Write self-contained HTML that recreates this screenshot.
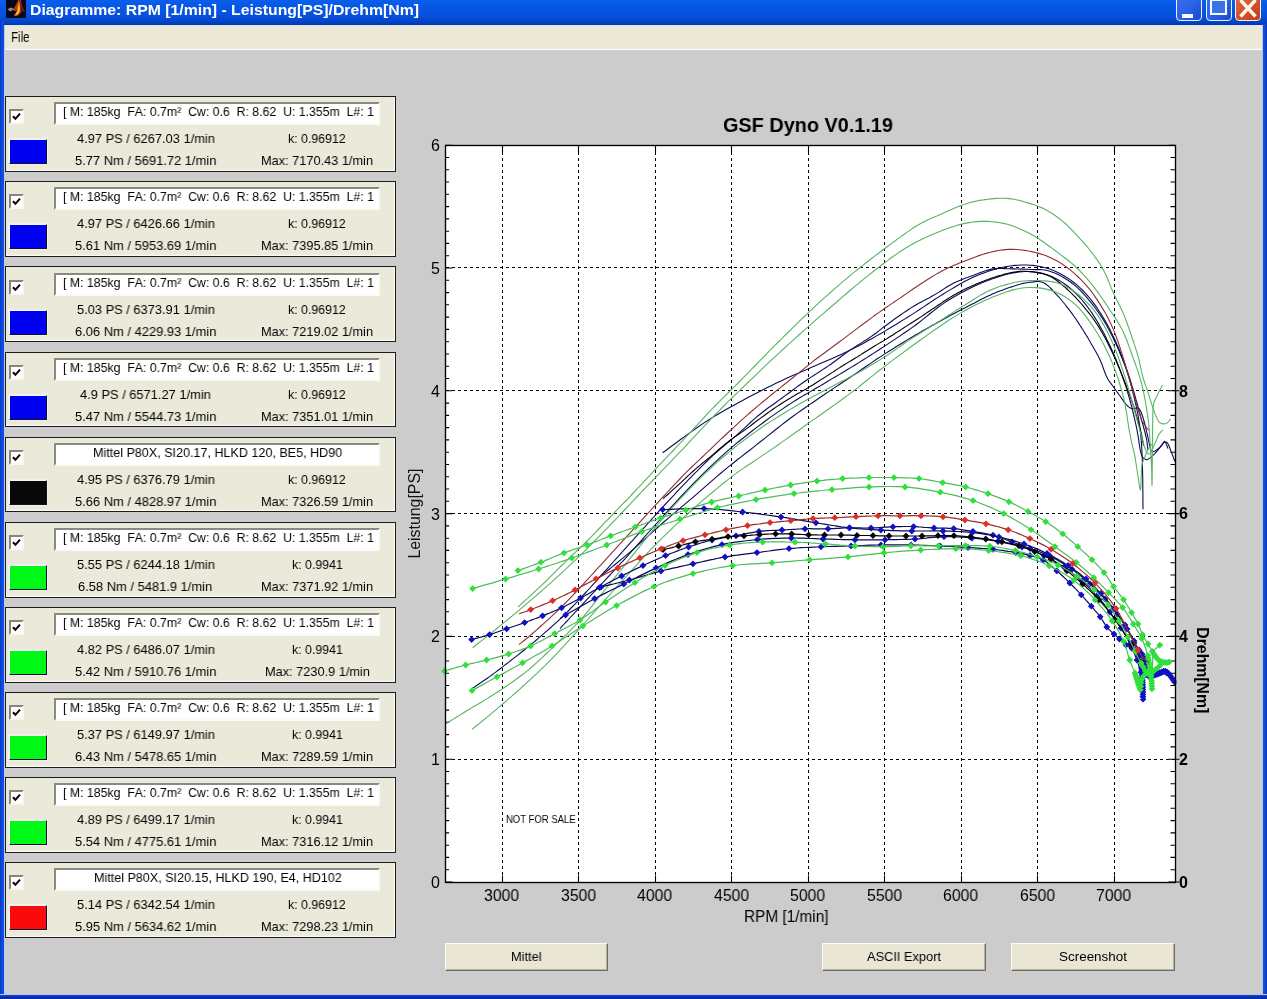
<!DOCTYPE html>
<html><head><meta charset="utf-8"><title>Diagramme</title><style>
html,body{margin:0;padding:0}
body{width:1267px;height:999px;overflow:hidden;background:#cccccc;font-family:"Liberation Sans", sans-serif;position:relative}
.t{position:absolute;white-space:pre;line-height:normal;transform-origin:0 0;font-kerning:none;will-change:transform}
.titlebar{position:absolute;left:0;top:0;width:1267px;height:25px;background:linear-gradient(#0b5fee 0,#0858e6 20%,#0653e0 55%,#0448cf 80%,#0238ac 100%)}
.menubar{position:absolute;left:4px;top:25px;width:1258px;height:24px;background:#ece9d8;border-top:1px solid #d8e4f8;box-sizing:border-box}
.menuline{position:absolute;left:4px;top:49px;width:1258px;height:1px;background:#fdfdfb}
.bl{position:absolute;left:0;top:20px;width:4px;height:979px;background:linear-gradient(90deg,#0a2fc0 0,#0b49dc 35%,#0c4fe0 100%)}
.bl2{position:absolute;left:4px;top:25px;width:1px;height:969px;background:#b9ccf0}
.br{position:absolute;left:1263px;top:24px;width:4px;height:975px;background:linear-gradient(90deg,#1552e0 0,#0c46d6 60%,#0a2fb4 100%)}
.br2{position:absolute;left:1261.5px;top:25px;width:1.5px;height:969px;background:#b6c8ee}
.bb{position:absolute;left:0;top:993.6px;width:1267px;height:5.4px;background:linear-gradient(#b8cdf6 0,#a9c0f2 16%,#1a43c0 30%,#0a2ba6 60%,#0a2fae 100%)}
.wb{position:absolute;top:-5px;height:26px;width:26px;border:1.3px solid #e8f2ff;border-radius:4px;box-sizing:border-box}
.pn{position:absolute;left:5px;width:391px;height:75.7px;box-sizing:border-box;border:1.3px solid #1c1c1c;background:#ebe9d9;box-shadow:inset -1.2px -1.2px 0 #fafaf2}
.cb{position:absolute;left:3.2px;top:12.4px;width:15px;height:15px;box-sizing:border-box;background:#fff;border:2px solid;border-color:#85857c #f8f8f2 #f8f8f2 #85857c}
.cb svg{position:absolute;left:0;top:0}
.ed{position:absolute;left:47.6px;top:4.8px;width:326.5px;height:23px;box-sizing:border-box;background:#fff;border:2px solid;border-color:#8a8a80 #fbfbf6 #fbfbf6 #8a8a80}
.sw{position:absolute;left:2.9px;top:41.8px;width:38.5px;height:25px;box-sizing:border-box;border:1px solid;border-color:#f4f4ff #101030 #101030 #f4f4ff;outline:1px solid #f2f0e6}
.btn{position:absolute;top:943px;height:27.8px;box-sizing:border-box;background:#e9e6d4;border:1.5px solid;border-color:#fbfbf4 #6e6e64 #6e6e64 #fbfbf4;box-shadow:inset -1px -1px 0 #b4b2a2}
.chart{position:absolute;left:0;top:0;will-change:transform}
</style></head><body>
<div class="titlebar"></div>
<svg style="position:absolute;left:6px;top:0" width="20" height="18" viewBox="0 0 20 18"><rect width="20" height="18" fill="#06061c"/><path d="M1.2 9.4 L4.6 7.4 L7.6 8.8 L5 11.6Z" fill="#8e9192"/><path d="M7 9 C9.5 6.5 11 2.5 12.2 0 L14.8 0 C15.4 4.5 16.8 8 18.8 11.5 C17 10.8 15.6 11.6 14.2 13.6 C12.6 15.6 10.6 16.6 8.4 16.2 L7.8 14.6 C9.6 13.6 11 12 12 9 C10.6 10.6 9 11.2 7.4 11Z" fill="#b63c0c"/><path d="M14 0 C14.6 4.5 16 8 18.6 11.3 C17 10.7 15.4 11.6 14.4 13 C14.8 9 14.4 5 13.4 0Z" fill="#6a1408"/><path d="M12.8 1 C13.7 5 14.3 8.5 13.6 11.6 C12.7 13.6 10.8 15.4 8.7 15.8 C11 13.6 12.2 10 12.8 1Z" fill="#ffc835"/><path d="M12.2 4 C12.6 7 12.4 9.6 11.4 12 C10.6 13.6 9.6 14.6 8.8 15.2 C10.6 12.6 11.6 9 12.2 4Z" fill="#f08a18"/></svg>
<div class="wb" style="left:1176px;background:linear-gradient(135deg,#3e6fe6 0,#2a62e8 50%,#1a49c8 100%)"><div style="position:absolute;left:4.5px;top:17.5px;width:11px;height:4px;background:#f4faff"></div></div>
<div class="wb" style="left:1205.5px;background:linear-gradient(135deg,#3e6fe6 0,#2a62e8 50%,#1a49c8 100%)"><div style="position:absolute;left:3.5px;top:1px;width:17px;height:17.5px;box-sizing:border-box;border:2.2px solid #f4faff;border-top-width:4px;background:#3a72ea"></div></div>
<div class="wb" style="left:1234.5px;width:26.5px;background:linear-gradient(135deg,#e0683f 0,#d54f27 55%,#b9411c 100%);border-color:#fbeee6"><svg style="position:absolute;left:0;top:0" width="24" height="24" viewBox="0 0 24 24"><path d="M4.5 4 L19.5 20.5 M19.5 4 L4.5 20.5" stroke="#fbf6ee" stroke-width="3.4" fill="none"/></svg></div>
<div class="menubar"></div><div class="menuline"></div>
<div class="bl"></div><div class="bl2"></div><div class="br2"></div><div class="br"></div><div class="bb"></div>
<div class="pn" style="top:96.20px"><div style="position:absolute;left:0;top:-0.20px"><div class="cb"><svg width="11" height="11" viewBox="0 0 11 11"><path d="M2 5.2 L4.4 7.8 L9 2.6" fill="none" stroke="#000" stroke-width="2"/></svg></div><div class="ed"></div><div class="sw" style="background:#0000f0"></div></div></div><div class="pn" style="top:181.33px"><div style="position:absolute;left:0;top:-0.33px"><div class="cb"><svg width="11" height="11" viewBox="0 0 11 11"><path d="M2 5.2 L4.4 7.8 L9 2.6" fill="none" stroke="#000" stroke-width="2"/></svg></div><div class="ed"></div><div class="sw" style="background:#0000f0"></div></div></div><div class="pn" style="top:266.46px"><div style="position:absolute;left:0;top:0.54px"><div class="cb"><svg width="11" height="11" viewBox="0 0 11 11"><path d="M2 5.2 L4.4 7.8 L9 2.6" fill="none" stroke="#000" stroke-width="2"/></svg></div><div class="ed"></div><div class="sw" style="background:#0000f0"></div></div></div><div class="pn" style="top:351.59px"><div style="position:absolute;left:0;top:0.41px"><div class="cb"><svg width="11" height="11" viewBox="0 0 11 11"><path d="M2 5.2 L4.4 7.8 L9 2.6" fill="none" stroke="#000" stroke-width="2"/></svg></div><div class="ed"></div><div class="sw" style="background:#0000f0"></div></div></div><div class="pn" style="top:436.72px"><div style="position:absolute;left:0;top:0.28px"><div class="cb"><svg width="11" height="11" viewBox="0 0 11 11"><path d="M2 5.2 L4.4 7.8 L9 2.6" fill="none" stroke="#000" stroke-width="2"/></svg></div><div class="ed"></div><div class="sw" style="background:#080808"></div></div></div><div class="pn" style="top:521.85px"><div style="position:absolute;left:0;top:0.15px"><div class="cb"><svg width="11" height="11" viewBox="0 0 11 11"><path d="M2 5.2 L4.4 7.8 L9 2.6" fill="none" stroke="#000" stroke-width="2"/></svg></div><div class="ed"></div><div class="sw" style="background:#00f816"></div></div></div><div class="pn" style="top:606.98px"><div style="position:absolute;left:0;top:0.02px"><div class="cb"><svg width="11" height="11" viewBox="0 0 11 11"><path d="M2 5.2 L4.4 7.8 L9 2.6" fill="none" stroke="#000" stroke-width="2"/></svg></div><div class="ed"></div><div class="sw" style="background:#00f816"></div></div></div><div class="pn" style="top:692.11px"><div style="position:absolute;left:0;top:-0.11px"><div class="cb"><svg width="11" height="11" viewBox="0 0 11 11"><path d="M2 5.2 L4.4 7.8 L9 2.6" fill="none" stroke="#000" stroke-width="2"/></svg></div><div class="ed"></div><div class="sw" style="background:#00f816"></div></div></div><div class="pn" style="top:777.24px"><div style="position:absolute;left:0;top:-0.24px"><div class="cb"><svg width="11" height="11" viewBox="0 0 11 11"><path d="M2 5.2 L4.4 7.8 L9 2.6" fill="none" stroke="#000" stroke-width="2"/></svg></div><div class="ed"></div><div class="sw" style="background:#00f816"></div></div></div><div class="pn" style="top:862.37px"><div style="position:absolute;left:0;top:-0.37px"><div class="cb"><svg width="11" height="11" viewBox="0 0 11 11"><path d="M2 5.2 L4.4 7.8 L9 2.6" fill="none" stroke="#000" stroke-width="2"/></svg></div><div class="ed"></div><div class="sw" style="background:#fa0a0a"></div></div></div>
<div class="btn" style="left:445px;width:163px"></div>
<div class="btn" style="left:822px;width:164px"></div>
<div class="btn" style="left:1011px;width:164px"></div>
<svg class="chart" width="1267" height="999" viewBox="0 0 1267 999" font-family='"Liberation Sans", sans-serif'><defs><clipPath id="cp"><rect x="445.0" y="145.5" width="730.5" height="737.0"/></clipPath><clipPath id="cp2"><rect x="441.5" y="145.5" width="735.0" height="737.0"/></clipPath></defs><rect x="445.5" y="145.5" width="730.0" height="737.0" fill="#fff"/>
<path d="M502.5 145.5 V882.5 M578.5 145.5 V882.5 M655.5 145.5 V882.5 M731.5 145.5 V882.5 M808.5 145.5 V882.5 M884.5 145.5 V882.5 M961.5 145.5 V882.5 M1037.5 145.5 V882.5 M1114.5 145.5 V882.5 M445.5 759.5 H1175.5 M445.5 636.5 H1175.5 M445.5 513.5 H1175.5 M445.5 390.5 H1175.5 M445.5 267.5 H1175.5" stroke="#000" stroke-width="1" stroke-dasharray="3 3" fill="none" shape-rendering="crispEdges"/>
<path d="M445.5 882.0 h7 M1175.5 882.0 h-7 M1175.5 882.0 h4 M445.5 869.7 h3.6 M1175.5 869.7 h-5 M445.5 857.4 h3.6 M1175.5 857.4 h-5 M445.5 845.2 h3.6 M1175.5 845.2 h-5 M445.5 832.9 h3.6 M1175.5 832.9 h-5 M445.5 820.6 h3.6 M1175.5 820.6 h-5 M445.5 808.3 h3.6 M1175.5 808.3 h-5 M445.5 796.0 h3.6 M1175.5 796.0 h-5 M445.5 783.8 h3.6 M1175.5 783.8 h-5 M445.5 771.5 h3.6 M1175.5 771.5 h-5 M445.5 759.2 h7 M1175.5 759.2 h-7 M1175.5 759.2 h4 M445.5 746.9 h3.6 M1175.5 746.9 h-5 M445.5 734.6 h3.6 M1175.5 734.6 h-5 M445.5 722.4 h3.6 M1175.5 722.4 h-5 M445.5 710.1 h3.6 M1175.5 710.1 h-5 M445.5 697.8 h3.6 M1175.5 697.8 h-5 M445.5 685.5 h3.6 M1175.5 685.5 h-5 M445.5 673.2 h3.6 M1175.5 673.2 h-5 M445.5 661.0 h3.6 M1175.5 661.0 h-5 M445.5 648.7 h3.6 M1175.5 648.7 h-5 M445.5 636.4 h7 M1175.5 636.4 h-7 M1175.5 636.4 h4 M445.5 624.1 h3.6 M1175.5 624.1 h-5 M445.5 611.8 h3.6 M1175.5 611.8 h-5 M445.5 599.6 h3.6 M1175.5 599.6 h-5 M445.5 587.3 h3.6 M1175.5 587.3 h-5 M445.5 575.0 h3.6 M1175.5 575.0 h-5 M445.5 562.7 h3.6 M1175.5 562.7 h-5 M445.5 550.4 h3.6 M1175.5 550.4 h-5 M445.5 538.2 h3.6 M1175.5 538.2 h-5 M445.5 525.9 h3.6 M1175.5 525.9 h-5 M445.5 513.6 h7 M1175.5 513.6 h-7 M1175.5 513.6 h4 M445.5 501.3 h3.6 M1175.5 501.3 h-5 M445.5 489.0 h3.6 M1175.5 489.0 h-5 M445.5 476.8 h3.6 M1175.5 476.8 h-5 M445.5 464.5 h3.6 M1175.5 464.5 h-5 M445.5 452.2 h3.6 M1175.5 452.2 h-5 M445.5 439.9 h3.6 M1175.5 439.9 h-5 M445.5 427.6 h3.6 M1175.5 427.6 h-5 M445.5 415.4 h3.6 M1175.5 415.4 h-5 M445.5 403.1 h3.6 M1175.5 403.1 h-5 M445.5 390.8 h7 M1175.5 390.8 h-7 M1175.5 390.8 h4 M445.5 378.5 h3.6 M1175.5 378.5 h-5 M445.5 366.2 h3.6 M1175.5 366.2 h-5 M445.5 354.0 h3.6 M1175.5 354.0 h-5 M445.5 341.7 h3.6 M1175.5 341.7 h-5 M445.5 329.4 h3.6 M1175.5 329.4 h-5 M445.5 317.1 h3.6 M1175.5 317.1 h-5 M445.5 304.8 h3.6 M1175.5 304.8 h-5 M445.5 292.6 h3.6 M1175.5 292.6 h-5 M445.5 280.3 h3.6 M1175.5 280.3 h-5 M445.5 268.0 h7 M1175.5 268.0 h-7 M445.5 255.7 h3.6 M1175.5 255.7 h-5 M445.5 243.4 h3.6 M1175.5 243.4 h-5 M445.5 231.2 h3.6 M1175.5 231.2 h-5 M445.5 218.9 h3.6 M1175.5 218.9 h-5 M445.5 206.6 h3.6 M1175.5 206.6 h-5 M445.5 194.3 h3.6 M1175.5 194.3 h-5 M445.5 182.0 h3.6 M1175.5 182.0 h-5 M445.5 169.8 h3.6 M1175.5 169.8 h-5 M445.5 157.5 h3.6 M1175.5 157.5 h-5 M445.5 145.2 h7 M1175.5 145.2 h-7 M502.5 882.5 v-7 M502.5 145.5 v7 M578.5 882.5 v-7 M578.5 145.5 v7 M655.5 882.5 v-7 M655.5 145.5 v7 M731.5 882.5 v-7 M731.5 145.5 v7 M808.5 882.5 v-7 M808.5 145.5 v7 M884.5 882.5 v-7 M884.5 145.5 v7 M961.5 882.5 v-7 M961.5 145.5 v7 M1037.5 882.5 v-7 M1037.5 145.5 v7 M1114.5 882.5 v-7 M1114.5 145.5 v7" stroke="#000" stroke-width="1.1" fill="none"/>
<g fill="none" stroke-linejoin="round">
<path d="M471.6 688.9 L473.0 687.9 L474.9 686.7 L477.1 685.2 L479.5 683.5 L482.1 681.8 L484.7 680.0 L487.3 678.2 L489.6 676.6 L491.8 675.0 L493.9 673.4 L496.0 671.9 L498.1 670.3 L500.2 668.7 L502.3 667.1 L504.4 665.4 L506.6 663.7 L508.8 662.1 L511.0 660.3 L513.3 658.6 L515.5 656.9 L517.8 655.1 L520.1 653.3 L522.3 651.5 L524.6 649.7 L526.8 647.9 L529.1 646.1 L531.3 644.2 L533.5 642.4 L535.8 640.5 L538.0 638.6 L540.3 636.7 L542.6 634.7 L544.9 632.7 L547.3 630.6 L549.7 628.5 L552.0 626.4 L554.4 624.2 L556.8 622.1 L559.2 619.8 L561.6 617.6 L564.0 615.2 L566.4 612.9 L568.7 610.5 L571.1 608.0 L573.5 605.6 L575.9 603.1 L578.2 600.6 L580.6 598.1 L582.9 595.5 L585.3 593.0 L587.6 590.5 L589.9 588.0 L592.2 585.4 L594.6 582.8 L597.0 580.1 L599.5 577.3 L602.1 574.4 L604.8 571.4 L607.6 568.3 L610.4 565.2 L613.2 562.0 L616.0 558.9 L618.8 555.8 L621.6 552.7 L624.3 549.7 L627.0 546.7 L629.6 543.7 L632.3 540.8 L634.9 537.9 L637.6 534.9 L640.3 531.9 L643.0 528.9 L645.8 525.8 L648.6 522.7 L651.4 519.6 L654.2 516.5 L657.0 513.3 L659.9 510.2 L662.7 507.1 L665.6 504.0 L668.5 500.9 L671.3 497.8 L674.2 494.8 L677.0 491.7 L679.9 488.7 L682.8 485.7 L685.7 482.7 L688.6 479.7 L691.5 476.7 L694.4 473.7 L697.3 470.8 L700.2 467.8 L703.2 464.9 L706.1 462.0 L709.0 459.2 L712.0 456.4 L715.0 453.7 L718.0 451.0 L721.0 448.4 L724.0 445.9 L727.0 443.3 L730.1 440.8 L733.0 438.2 L736.0 435.7 L738.9 433.1 L741.8 430.4 L744.7 427.8 L747.6 425.1 L750.4 422.5 L753.3 419.9 L756.1 417.4 L759.0 415.0 L761.9 412.7 L764.8 410.5 L767.6 408.3 L770.5 406.3 L773.4 404.2 L776.2 402.2 L779.1 400.1 L782.0 398.0 L784.9 395.9 L787.8 393.8 L790.6 391.7 L793.5 389.5 L796.4 387.4 L799.2 385.3 L802.1 383.3 L805.0 381.3 L807.9 379.3 L810.8 377.4 L813.7 375.5 L816.6 373.6 L819.5 371.8 L822.3 369.9 L825.2 368.0 L828.0 366.1 L830.8 364.2 L833.5 362.2 L836.2 360.2 L838.9 358.2 L841.6 356.2 L844.2 354.2 L846.9 352.3 L849.6 350.4 L852.3 348.6 L855.0 346.9 L857.6 345.2 L860.3 343.6 L862.9 341.9 L865.6 340.2 L868.3 338.5 L871.0 336.6 L873.7 334.7 L876.5 332.7 L879.3 330.6 L882.0 328.4 L884.8 326.3 L887.6 324.2 L890.3 322.2 L893.0 320.2 L895.6 318.3 L898.3 316.5 L900.8 314.7 L903.4 312.9 L906.0 311.2 L908.5 309.5 L911.0 307.9 L913.6 306.3 L916.2 304.7 L918.7 303.3 L921.3 301.9 L923.9 300.6 L926.4 299.2 L929.0 297.9 L931.5 296.5 L934.0 295.1 L936.5 293.6 L939.0 292.1 L941.5 290.5 L943.9 288.9 L946.4 287.3 L948.8 285.8 L951.3 284.4 L953.7 283.1 L956.1 281.9 L958.5 280.9 L960.9 279.9 L963.3 278.9 L965.7 278.0 L968.1 277.2 L970.6 276.3 L973.0 275.4 L975.5 274.5 L978.0 273.6 L980.5 272.6 L983.0 271.7 L985.5 270.8 L988.1 270.1 L990.5 269.4 L993.0 268.9 L995.4 268.6 L997.8 268.4 L1000.2 268.4 L1002.6 268.5 L1005.0 268.6 L1007.3 268.7 L1009.7 268.8 L1012.0 268.9 L1014.3 268.9 L1016.5 269.0 L1018.7 269.0 L1020.9 269.1 L1023.2 269.1 L1025.4 269.2 L1027.7 269.3 L1030.0 269.5 L1032.4 269.5 L1034.8 269.6 L1037.2 269.6 L1039.6 269.6 L1042.1 269.8 L1044.6 270.0 L1047.2 270.5 L1049.8 271.2 L1052.5 272.2 L1055.3 273.3 L1058.1 274.6 L1061.0 276.1 L1063.9 277.8 L1066.7 279.5 L1069.4 281.3 L1072.0 283.2 L1074.5 285.1 L1076.9 287.2 L1079.2 289.4 L1081.5 291.7 L1083.7 294.0 L1085.8 296.4 L1087.9 298.9 L1090.0 301.3 L1092.0 303.8 L1094.0 306.4 L1096.0 309.0 L1097.9 311.6 L1099.7 314.3 L1101.5 317.1 L1103.3 319.8 L1105.0 322.6 L1106.7 325.5 L1108.3 328.4 L1109.8 331.3 L1111.3 334.2 L1112.8 337.2 L1114.2 340.2 L1115.6 343.2 L1117.0 346.3 L1118.4 349.4 L1119.7 352.5 L1121.0 355.7 L1122.3 358.8 L1123.6 362.0 L1124.8 365.2 L1125.9 368.4 L1127.0 371.6 L1128.0 374.7 L1129.0 377.9 L1129.9 381.0 L1130.8 384.2 L1131.7 387.3 L1132.5 390.5 L1133.2 393.6 L1134.0 396.7 L1134.7 399.8 L1135.4 402.8 L1136.1 405.9 L1136.8 408.9 L1137.4 411.9 L1138.0 415.0 L1138.5 418.0 L1139.0 421.0 L1139.4 423.9 L1139.8 426.8 L1140.2 429.6 L1140.5 432.5 L1140.8 435.3 L1141.0 438.2 L1141.3 441.3 L1141.5 444.4 L1141.7 447.7 L1141.9 451.0 L1142.0 454.3 L1142.2 457.7 L1142.3 461.2 L1142.4 464.9 L1142.5 468.7 L1142.6 472.6 L1142.7 477.1 L1142.8 482.1 L1142.8 487.4 L1142.9 492.7 L1142.9 497.9 L1142.9 502.5 L1143.0 506.4 L1143.0 509.3" stroke="#0c0c58" stroke-width="1.1" clip-path="url(#cp)"/>
<path d="M560.0 628.7 L560.3 628.3 L560.5 628.1 L560.7 627.9 L561.0 627.5 L561.5 626.9 L562.4 625.9 L563.7 624.5 L565.6 622.5 L568.1 619.9 L571.2 616.5 L574.8 612.7 L578.6 608.6 L582.7 604.2 L586.8 599.7 L590.8 595.4 L594.6 591.3 L598.2 587.4 L601.8 583.6 L605.4 579.8 L609.0 576.0 L612.6 572.1 L616.3 568.2 L620.0 564.2 L623.8 560.1 L627.7 555.8 L631.6 551.4 L635.7 546.9 L639.7 542.3 L643.8 537.7 L647.9 533.0 L652.0 528.5 L656.0 524.0 L660.0 519.5 L664.0 515.1 L667.9 510.8 L671.9 506.4 L675.9 502.1 L679.9 497.7 L683.9 493.5 L688.0 489.2 L692.1 484.9 L696.3 480.6 L700.5 476.4 L704.8 472.1 L709.1 468.0 L713.4 463.8 L717.7 459.8 L722.0 455.8 L726.4 451.9 L730.8 448.1 L735.2 444.4 L739.7 440.8 L744.2 437.2 L748.6 433.7 L753.0 430.3 L757.4 426.9 L761.7 423.7 L766.0 420.5 L770.3 417.4 L774.6 414.4 L778.8 411.4 L783.0 408.6 L787.2 405.8 L791.3 403.1 L795.4 400.5 L799.4 398.0 L803.3 395.6 L807.3 393.4 L811.2 391.1 L815.1 388.8 L819.0 386.6 L823.0 384.2 L827.0 381.8 L831.0 379.4 L835.1 377.0 L839.1 374.6 L843.1 372.2 L847.1 369.8 L851.1 367.4 L855.0 365.0 L858.8 362.6 L862.6 360.2 L866.4 357.9 L870.1 355.5 L873.8 353.1 L877.5 350.7 L881.3 348.3 L885.0 345.9 L888.8 343.4 L892.5 340.9 L896.3 338.4 L900.1 335.9 L903.8 333.3 L907.6 330.7 L911.3 328.1 L915.0 325.5 L918.7 322.7 L922.3 319.9 L926.0 316.9 L929.6 314.0 L933.2 311.1 L936.8 308.3 L940.4 305.6 L944.0 303.1 L947.6 300.8 L951.1 298.5 L954.7 296.4 L958.2 294.5 L961.7 292.6 L965.2 290.7 L968.6 289.0 L972.0 287.3 L975.4 285.7 L978.7 284.2 L982.0 282.8 L985.2 281.4 L988.5 280.2 L991.7 279.0 L994.9 277.9 L998.0 276.9 L1001.1 275.9 L1004.2 275.0 L1007.2 274.2 L1010.2 273.5 L1013.2 272.9 L1016.2 272.4 L1019.1 272.0 L1022.0 271.7 L1024.9 271.5 L1027.7 271.5 L1030.5 271.6 L1033.2 271.8 L1036.0 272.1 L1038.7 272.6 L1041.4 273.1 L1044.0 273.8 L1046.6 274.6 L1049.2 275.5 L1051.7 276.6 L1054.2 277.7 L1056.7 279.0 L1059.2 280.4 L1061.6 281.9 L1064.0 283.5 L1066.4 285.2 L1068.7 287.0 L1071.0 289.0 L1073.3 291.0 L1075.6 293.2 L1077.8 295.4 L1079.9 297.7 L1082.0 300.0 L1084.0 302.4 L1086.0 304.8 L1087.9 307.4 L1089.8 310.0 L1091.7 312.6 L1093.5 315.4 L1095.2 318.1 L1097.0 321.0 L1098.7 323.9 L1100.4 326.9 L1102.1 329.9 L1103.8 333.1 L1105.4 336.2 L1106.9 339.4 L1108.5 342.6 L1110.0 345.8 L1111.5 349.1 L1112.9 352.3 L1114.4 355.6 L1115.8 358.9 L1117.1 362.2 L1118.4 365.6 L1119.7 369.0 L1121.0 372.4 L1122.2 375.8 L1123.4 379.3 L1124.6 382.7 L1125.8 386.2 L1126.9 389.8 L1127.9 393.3 L1129.0 396.9 L1130.0 400.5 L1131.0 404.1 L1132.0 407.9 L1132.9 411.7 L1133.8 415.5 L1134.7 419.3 L1135.5 423.0 L1136.3 426.5 L1137.0 429.9 L1137.6 433.3 L1138.2 436.6 L1138.7 440.0 L1139.1 443.1 L1139.6 446.2 L1140.0 448.9 L1140.5 451.4 L1141.0 453.4 L1141.5 455.1 L1142.1 456.3 L1142.7 457.3 L1143.3 458.0 L1143.9 458.5 L1144.4 458.8 L1145.0 459.1 L1145.6 459.4 L1146.1 459.6 L1146.7 459.7 L1147.2 459.6 L1147.7 459.4 L1148.2 459.1 L1148.8 458.8 L1149.4 458.4 L1150.0 457.9 L1150.7 457.4 L1151.4 456.8 L1152.2 456.1 L1153.0 455.3 L1153.8 454.6 L1154.6 453.8 L1155.3 453.0 L1156.0 452.3 L1156.6 451.7 L1157.1 451.0 L1157.7 450.4 L1158.1 449.8 L1158.6 449.2 L1159.1 448.6 L1159.5 448.0 L1160.0 447.4 L1160.5 446.8 L1160.9 446.1 L1161.4 445.4 L1161.9 444.7 L1162.3 444.1 L1162.8 443.5 L1163.2 443.0 L1163.7 442.7 L1164.2 442.4 L1164.7 442.3 L1165.2 442.2 L1165.7 442.2 L1166.1 442.2 L1166.6 442.4 L1167.1 442.7 L1167.5 443.1 L1167.9 443.6 L1168.2 444.2 L1168.6 444.9 L1168.9 445.7 L1169.2 446.5 L1169.6 447.5 L1170.0 448.6 L1170.4 449.7 L1170.9 451.0 L1171.5 452.6 L1172.2 454.3 L1172.9 456.1 L1173.5 457.8 L1174.1 459.3 L1174.6 460.7 L1175.0 461.6" stroke="#0c0c58" stroke-width="1.1" clip-path="url(#cp)"/>
<path d="M662.6 452.8 L665.8 450.5 L670.1 447.3 L675.2 443.5 L680.9 439.3 L686.9 434.9 L692.9 430.6 L698.7 426.5 L704.0 422.9 L709.0 419.7 L713.9 416.6 L718.7 413.8 L723.5 411.0 L728.3 408.3 L733.0 405.7 L737.8 403.1 L742.6 400.4 L747.4 397.8 L752.3 395.2 L757.2 392.7 L762.0 390.2 L766.9 387.8 L771.7 385.4 L776.4 383.1 L781.0 380.9 L785.5 378.7 L790.0 376.7 L794.4 374.7 L798.8 372.9 L803.1 371.0 L807.4 369.2 L811.6 367.3 L815.9 365.5 L820.2 363.6 L824.4 361.8 L828.6 360.0 L832.8 358.2 L837.0 356.3 L841.1 354.5 L845.2 352.6 L849.3 350.6 L853.3 348.6 L857.3 346.5 L861.3 344.4 L865.3 342.3 L869.2 340.1 L873.1 337.9 L877.0 335.6 L880.9 333.4 L884.8 331.1 L888.7 328.8 L892.5 326.5 L896.4 324.2 L900.2 321.8 L904.1 319.4 L907.9 317.0 L911.8 314.6 L915.7 312.1 L919.6 309.5 L923.6 306.9 L927.5 304.2 L931.4 301.6 L935.3 299.0 L939.2 296.6 L943.0 294.2 L946.7 291.9 L950.5 289.6 L954.1 287.5 L957.8 285.3 L961.4 283.3 L964.9 281.3 L968.5 279.5 L972.0 277.8 L975.5 276.3 L978.9 274.8 L982.4 273.5 L985.8 272.2 L989.1 271.1 L992.4 270.0 L995.7 269.1 L999.0 268.3 L1002.2 267.5 L1005.4 266.8 L1008.6 266.3 L1011.8 265.8 L1014.9 265.4 L1017.9 265.2 L1021.0 265.0 L1024.0 265.0 L1027.0 265.0 L1029.9 265.2 L1032.9 265.4 L1035.8 265.8 L1038.6 266.2 L1041.4 266.8 L1044.2 267.5 L1047.0 268.2 L1049.7 269.1 L1052.5 270.1 L1055.2 271.2 L1057.8 272.5 L1060.4 273.8 L1063.0 275.2 L1065.5 276.7 L1068.0 278.3 L1070.4 279.9 L1072.8 281.7 L1075.1 283.5 L1077.4 285.4 L1079.6 287.4 L1081.8 289.5 L1083.9 291.7 L1086.0 293.9 L1088.0 296.1 L1090.0 298.5 L1091.9 300.9 L1093.8 303.4 L1095.7 305.9 L1097.5 308.5 L1099.2 311.2 L1101.0 313.9 L1102.7 316.7 L1104.4 319.6 L1106.1 322.5 L1107.8 325.5 L1109.4 328.5 L1110.9 331.6 L1112.5 334.7 L1114.0 337.8 L1115.5 341.0 L1116.9 344.3 L1118.4 347.5 L1119.8 350.9 L1121.1 354.2 L1122.4 357.6 L1123.7 361.0 L1125.0 364.4 L1126.2 367.9 L1127.4 371.4 L1128.6 375.0 L1129.8 378.6 L1130.9 382.2 L1131.9 385.7 L1133.0 389.2 L1134.0 392.6 L1135.0 396.0 L1135.9 399.3 L1136.9 402.7 L1137.8 406.0 L1138.6 409.2 L1139.4 412.3 L1140.2 415.2 L1141.0 418.1 L1141.7 420.7 L1142.5 423.3 L1143.2 425.7 L1143.8 428.0 L1144.4 430.2 L1145.0 432.4 L1145.5 434.5 L1146.0 436.5 L1146.4 438.5 L1146.8 440.5 L1147.1 442.5 L1147.3 444.4 L1147.5 446.2 L1147.7 447.7 L1147.9 449.0 L1148.0 450.1" stroke="#0c0c58" stroke-width="1.1" clip-path="url(#cp)"/>
<path d="M596.0 580.1 L596.2 579.9 L596.3 579.8 L596.5 579.7 L596.7 579.4 L597.2 579.0 L598.0 578.3 L599.2 577.3 L601.0 575.8 L603.4 573.9 L606.4 571.5 L609.8 568.8 L613.5 565.7 L617.5 562.5 L621.5 559.2 L625.5 555.9 L629.4 552.6 L633.2 549.3 L637.1 545.9 L641.0 542.4 L645.0 538.8 L649.0 535.2 L653.0 531.6 L657.0 528.0 L661.0 524.5 L665.0 521.0 L669.0 517.6 L673.0 514.2 L677.0 510.8 L681.0 507.4 L685.0 504.1 L689.0 500.7 L693.0 497.3 L697.0 493.8 L701.0 490.3 L705.0 486.8 L709.0 483.3 L713.0 479.9 L717.0 476.4 L721.0 473.0 L725.0 469.7 L729.0 466.4 L733.0 463.2 L737.0 460.0 L741.0 456.9 L745.0 453.8 L749.0 450.7 L753.0 447.6 L757.0 444.4 L761.0 441.3 L765.0 438.1 L769.0 434.9 L773.0 431.7 L777.0 428.5 L781.0 425.4 L785.0 422.3 L789.0 419.3 L793.0 416.3 L797.0 413.4 L801.1 410.5 L805.1 407.7 L809.1 404.9 L813.1 402.2 L817.1 399.5 L821.0 396.8 L824.8 394.2 L828.6 391.6 L832.4 389.1 L836.1 386.6 L839.8 384.2 L843.5 381.7 L847.3 379.2 L851.0 376.7 L854.8 374.2 L858.5 371.6 L862.2 369.0 L866.0 366.5 L869.8 363.9 L873.5 361.4 L877.2 358.8 L881.0 356.4 L884.8 353.9 L888.5 351.5 L892.3 349.2 L896.1 346.8 L899.8 344.5 L903.6 342.2 L907.3 339.9 L911.0 337.7 L914.7 335.5 L918.3 333.4 L922.0 331.3 L925.6 329.2 L929.2 327.2 L932.8 325.1 L936.4 323.2 L940.0 321.2 L943.6 319.2 L947.1 317.3 L950.7 315.3 L954.2 313.4 L957.8 311.6 L961.2 309.8 L964.7 308.0 L968.0 306.2 L971.3 304.5 L974.5 302.9 L977.7 301.2 L980.8 299.6 L983.9 298.1 L987.0 296.6 L990.0 295.2 L993.0 293.8 L996.0 292.6 L999.1 291.3 L1002.1 290.2 L1005.1 289.1 L1008.0 288.1 L1010.8 287.1 L1013.4 286.3 L1015.8 285.5 L1018.0 284.8 L1020.0 284.3 L1021.8 283.8 L1023.5 283.4 L1025.1 283.0 L1026.7 282.7 L1028.3 282.5 L1030.0 282.3 L1031.7 282.1 L1033.4 281.9 L1035.0 281.6 L1036.7 281.5 L1038.3 281.5 L1040.0 281.6 L1041.6 282.0 L1043.3 282.6 L1045.0 283.5 L1046.7 284.7 L1048.4 286.1 L1050.1 287.7 L1051.8 289.5 L1053.5 291.3 L1055.1 293.1 L1056.8 294.9 L1058.5 296.7 L1060.1 298.5 L1061.8 300.5 L1063.4 302.5 L1065.1 304.5 L1066.7 306.6 L1068.3 308.6 L1069.8 310.6 L1071.3 312.7 L1072.8 314.7 L1074.2 316.7 L1075.7 318.8 L1077.1 320.9 L1078.5 322.9 L1079.8 325.0 L1081.2 327.1 L1082.5 329.2 L1083.8 331.3 L1085.1 333.4 L1086.4 335.5 L1087.7 337.6 L1088.9 339.7 L1090.1 341.8 L1091.3 343.9 L1092.5 346.0 L1093.7 348.0 L1094.8 350.0 L1096.0 352.0 L1097.1 354.1 L1098.2 356.1 L1099.2 358.1 L1100.2 360.2 L1101.1 362.3 L1102.0 364.5 L1102.8 366.8 L1103.6 369.0 L1104.4 371.2 L1105.2 373.3 L1106.0 375.3 L1106.8 377.1 L1107.7 378.8 L1108.6 380.3 L1109.5 381.7 L1110.5 383.0 L1111.4 384.2 L1112.3 385.4 L1113.2 386.5 L1114.0 387.6 L1114.8 388.7 L1115.4 389.7 L1116.1 390.6 L1116.7 391.5 L1117.4 392.4 L1118.0 393.2 L1118.7 394.2 L1119.4 395.2 L1120.2 396.3 L1121.0 397.4 L1121.8 398.7 L1122.7 399.9 L1123.5 401.1 L1124.4 402.3 L1125.2 403.3 L1126.0 404.3 L1126.8 405.1 L1127.5 405.8 L1128.2 406.5 L1129.0 407.1 L1129.7 407.6 L1130.4 408.0 L1131.2 408.4 L1132.0 408.7 L1132.8 408.8 L1133.7 408.7 L1134.6 408.5 L1135.6 408.2 L1136.5 408.0 L1137.4 408.0 L1138.2 408.2 L1139.0 408.7 L1139.7 409.6 L1140.4 410.8 L1141.1 412.2 L1141.7 413.8 L1142.3 415.5 L1142.9 417.2 L1143.4 419.1 L1144.0 420.9 L1144.6 422.8 L1145.1 424.9 L1145.6 427.1 L1146.1 429.3 L1146.6 431.5 L1147.1 433.7 L1147.6 435.8 L1148.0 437.7 L1148.4 439.5 L1148.8 441.4 L1149.2 443.1 L1149.5 444.8 L1149.8 446.4 L1150.2 447.8 L1150.6 449.0 L1151.0 449.9 L1151.4 450.6 L1151.9 451.1 L1152.3 451.5 L1152.8 451.6 L1153.3 451.6 L1153.8 451.5 L1154.4 451.3 L1155.0 451.0 L1155.7 450.6 L1156.6 450.0 L1157.5 449.3 L1158.5 448.5 L1159.4 447.6 L1160.3 446.8 L1161.1 446.0 L1161.8 445.3 L1162.3 444.6 L1162.8 443.9 L1163.2 443.2 L1163.5 442.6 L1163.8 442.0 L1164.0 441.6 L1164.3 441.4 L1164.7 441.4 L1165.1 441.8 L1165.6 442.6 L1166.1 443.6 L1166.5 444.7 L1167.0 445.9 L1167.4 447.0 L1167.7 447.9 L1168.0 448.5" stroke="#0c0c58" stroke-width="1.1" clip-path="url(#cp)"/>
<path d="M663.0 498.7 L664.2 497.6 L665.8 496.2 L667.7 494.5 L669.8 492.7 L672.0 490.7 L674.2 488.7 L676.5 486.7 L678.6 484.7 L680.6 482.9 L682.7 480.9 L684.8 478.9 L686.9 476.9 L689.1 474.9 L691.2 472.9 L693.3 471.0 L695.4 469.1 L697.5 467.3 L699.6 465.6 L701.7 463.8 L703.8 462.1 L705.8 460.4 L707.9 458.8 L710.0 457.1 L712.0 455.4 L714.0 453.7 L716.0 451.9 L718.0 450.2 L720.0 448.5 L722.0 446.8 L724.0 445.1 L726.0 443.4 L728.0 441.9 L730.0 440.3 L732.0 438.9 L734.0 437.4 L736.0 436.1 L738.0 434.7 L740.0 433.3 L742.0 431.9 L744.0 430.5 L746.0 429.1 L747.9 427.6 L749.9 426.2 L751.8 424.7 L753.7 423.2 L755.7 421.8 L757.6 420.3 L759.6 418.9 L761.6 417.4 L763.6 416.0 L765.6 414.5 L767.6 413.0 L769.6 411.6 L771.6 410.2 L773.6 408.8 L775.6 407.4 L777.6 406.1 L779.6 404.8 L781.6 403.5 L783.5 402.3 L785.5 401.0 L787.5 399.8 L789.6 398.6 L791.6 397.3 L793.7 396.1 L795.8 394.8 L797.9 393.6 L800.1 392.4 L802.3 391.1 L804.4 389.9 L806.5 388.7 L808.6 387.4 L810.6 386.2 L812.7 385.0 L814.7 383.7 L816.6 382.5 L818.6 381.2 L820.6 379.9 L822.6 378.7 L824.6 377.4 L826.6 376.1 L828.7 374.8 L830.7 373.4 L832.8 372.1 L834.9 370.7 L836.9 369.4 L839.0 368.1 L841.0 366.8 L843.0 365.5 L845.0 364.3 L847.0 363.1 L849.0 361.9 L851.0 360.7 L853.0 359.5 L855.0 358.3 L857.0 357.1 L859.0 355.8 L861.0 354.6 L863.0 353.3 L865.0 352.0 L867.0 350.8 L869.0 349.5 L871.0 348.3 L873.0 347.0 L875.0 345.8 L877.0 344.6 L879.0 343.4 L880.9 342.3 L882.9 341.1 L884.9 339.9 L887.0 338.6 L889.0 337.3 L891.1 336.0 L893.2 334.7 L895.3 333.3 L897.5 331.9 L899.7 330.5 L901.8 329.1 L903.9 327.7 L906.0 326.4 L908.0 325.1 L910.1 323.8 L912.1 322.5 L914.1 321.2 L916.0 320.0 L918.0 318.7 L920.0 317.4 L922.0 316.1 L924.0 314.8 L926.0 313.4 L928.0 312.0 L930.0 310.7 L932.0 309.3 L934.0 308.0 L936.0 306.6 L938.0 305.3 L940.0 304.0 L942.0 302.6 L943.9 301.3 L945.9 300.0 L947.9 298.7 L949.9 297.4 L951.9 296.2 L953.9 295.0 L955.9 293.9 L958.0 292.8 L960.1 291.7 L962.1 290.6 L964.2 289.6 L966.3 288.6 L968.3 287.6 L970.3 286.7 L972.3 285.8 L974.2 284.9 L976.2 284.1 L978.1 283.3 L980.0 282.5 L981.9 281.7 L983.8 281.0 L985.8 280.2 L987.8 279.5 L989.8 278.8 L991.8 278.1 L993.8 277.4 L995.8 276.8 L997.8 276.1 L999.8 275.5 L1001.9 275.0 L1004.0 274.4 L1006.1 273.8 L1008.3 273.3 L1010.4 272.8 L1012.6 272.4 L1014.7 272.0 L1016.8 271.7 L1018.9 271.4 L1020.9 271.3 L1022.9 271.3 L1024.9 271.3 L1026.8 271.3 L1028.8 271.5 L1030.7 271.7 L1032.7 271.9 L1034.7 272.3 L1036.7 272.6 L1038.7 273.0 L1040.8 273.4 L1042.8 273.8 L1044.9 274.4 L1046.9 275.1 L1049.0 275.9 L1051.0 276.8 L1053.0 278.0 L1055.0 279.3 L1057.0 280.7 L1059.0 282.2 L1061.0 283.8 L1062.9 285.5 L1064.9 287.2 L1066.9 289.0 L1068.9 290.8 L1070.8 292.7 L1072.8 294.6 L1074.8 296.6 L1076.7 298.7 L1078.7 300.8 L1080.7 303.0 L1082.7 305.4 L1084.7 307.8 L1086.7 310.3 L1088.8 312.8 L1090.8 315.5 L1092.9 318.2 L1094.9 321.1 L1097.0 324.2 L1099.0 327.4 L1101.0 330.7 L1103.0 334.2 L1105.0 337.8 L1107.0 341.6 L1108.9 345.5 L1110.9 349.6 L1113.0 353.9 L1115.0 358.5 L1117.1 363.3 L1119.4 368.7 L1121.7 374.2 L1123.9 380.0 L1126.2 385.7 L1128.3 391.4 L1130.3 396.7 L1132.0 401.6 L1133.6 406.2 L1135.0 410.6 L1136.2 414.9 L1137.4 418.9 L1138.5 422.7 L1139.4 426.2 L1140.2 429.4 L1141.0 432.4 L1141.6 435.0 L1142.1 437.3 L1142.5 439.2 L1142.8 441.0 L1143.0 442.4 L1143.2 443.7 L1143.4 444.8 L1143.5 445.7" stroke="#000000" stroke-width="1.1" clip-path="url(#cp)"/>
<path d="M518.0 607.0 L519.8 605.4 L522.1 603.2 L524.9 600.7 L528.1 597.9 L531.4 594.8 L534.7 591.7 L538.0 588.7 L541.0 585.8 L543.9 583.1 L546.8 580.3 L549.6 577.4 L552.5 574.6 L555.4 571.7 L558.2 568.8 L561.1 566.0 L564.0 563.1 L566.9 560.4 L569.7 557.6 L572.6 554.9 L575.5 552.2 L578.3 549.5 L581.2 546.7 L584.1 543.9 L587.0 541.0 L589.9 538.1 L592.9 535.1 L595.8 532.1 L598.7 529.0 L601.7 525.9 L604.7 522.7 L607.7 519.6 L610.7 516.5 L613.7 513.3 L616.8 510.1 L619.9 506.9 L623.0 503.7 L626.1 500.5 L629.2 497.3 L632.3 494.0 L635.4 490.7 L638.5 487.4 L641.7 484.1 L644.8 480.7 L648.0 477.3 L651.1 473.9 L654.3 470.5 L657.4 467.1 L660.6 463.7 L663.7 460.4 L666.9 457.1 L670.0 453.8 L673.2 450.5 L676.3 447.2 L679.5 443.9 L682.6 440.6 L685.8 437.2 L689.0 433.8 L692.2 430.3 L695.4 426.8 L698.6 423.3 L701.8 419.8 L705.1 416.3 L708.3 412.8 L711.6 409.4 L714.9 406.0 L718.3 402.6 L721.7 399.2 L725.1 395.9 L728.5 392.5 L731.9 389.2 L735.2 385.9 L738.6 382.5 L741.9 379.1 L745.3 375.7 L748.6 372.3 L751.9 368.9 L755.2 365.5 L758.5 362.1 L761.7 358.8 L765.0 355.5 L768.2 352.2 L771.4 348.9 L774.6 345.7 L777.8 342.5 L781.0 339.4 L784.2 336.2 L787.4 333.0 L790.6 329.8 L793.9 326.6 L797.2 323.4 L800.5 320.2 L803.8 317.0 L807.1 313.8 L810.4 310.7 L813.7 307.6 L817.0 304.6 L820.2 301.6 L823.4 298.7 L826.6 295.8 L829.8 293.0 L833.0 290.2 L836.2 287.4 L839.4 284.6 L842.6 281.9 L845.9 279.1 L849.2 276.4 L852.5 273.6 L855.8 270.9 L859.2 268.3 L862.5 265.6 L865.8 263.0 L869.0 260.5 L872.2 258.0 L875.3 255.6 L878.5 253.2 L881.6 250.8 L884.7 248.5 L887.8 246.2 L890.9 243.9 L894.0 241.7 L897.1 239.4 L900.3 237.1 L903.4 234.8 L906.6 232.6 L909.7 230.4 L912.8 228.3 L915.9 226.3 L919.0 224.5 L922.0 222.8 L925.0 221.2 L928.0 219.8 L930.9 218.5 L933.9 217.2 L936.8 216.0 L939.7 214.7 L942.6 213.4 L945.5 212.1 L948.4 210.8 L951.3 209.5 L954.2 208.3 L957.0 207.1 L959.9 205.9 L962.8 204.8 L965.6 203.9 L968.4 203.0 L971.3 202.3 L974.1 201.6 L976.9 201.0 L979.7 200.4 L982.5 200.0 L985.3 199.6 L988.0 199.2 L990.7 198.9 L993.4 198.6 L996.1 198.4 L998.7 198.3 L1001.3 198.3 L1003.9 198.3 L1006.5 198.4 L1009.0 198.6 L1011.5 198.9 L1013.9 199.2 L1016.3 199.7 L1018.7 200.3 L1021.1 200.9 L1023.4 201.5 L1025.7 202.2 L1028.0 202.9 L1030.3 203.6 L1032.5 204.3 L1034.8 205.1 L1037.0 205.9 L1039.2 206.7 L1041.4 207.6 L1043.5 208.6 L1045.7 209.7 L1047.9 210.9 L1050.0 212.2 L1052.2 213.5 L1054.4 215.0 L1056.5 216.5 L1058.6 218.0 L1060.7 219.6 L1062.7 221.3 L1064.7 223.0 L1066.6 224.7 L1068.5 226.6 L1070.4 228.5 L1072.3 230.4 L1074.1 232.4 L1076.0 234.3 L1077.8 236.3 L1079.6 238.3 L1081.5 240.3 L1083.3 242.3 L1085.1 244.3 L1086.9 246.4 L1088.6 248.5 L1090.3 250.6 L1092.0 252.8 L1093.6 255.0 L1095.2 257.2 L1096.8 259.3 L1098.3 261.6 L1099.8 263.8 L1101.2 266.2 L1102.6 268.6 L1104.0 271.1 L1105.3 273.7 L1106.6 276.4 L1107.8 279.2 L1108.9 282.1 L1110.1 285.0 L1111.2 287.9 L1112.4 290.7 L1113.6 293.4 L1114.8 296.1 L1116.1 298.7 L1117.4 301.2 L1118.7 303.7 L1120.0 306.3 L1121.2 308.8 L1122.4 311.4 L1123.6 314.1 L1124.7 316.8 L1125.8 319.5 L1126.8 322.3 L1127.8 325.2 L1128.8 328.0 L1129.8 330.8 L1130.7 333.5 L1131.6 336.2 L1132.5 338.8 L1133.4 341.3 L1134.2 343.9 L1135.0 346.3 L1135.8 348.8 L1136.6 351.3 L1137.3 353.7 L1138.0 356.2 L1138.7 358.7 L1139.3 361.2 L1139.8 363.7 L1140.4 366.2 L1140.9 368.7 L1141.4 371.2 L1142.0 373.6 L1142.6 375.9 L1143.2 378.1 L1143.9 380.3 L1144.6 382.5 L1145.3 384.6 L1146.0 386.6 L1146.7 388.6 L1147.4 390.6 L1148.0 392.5 L1148.6 394.4 L1149.2 396.2 L1149.7 398.0 L1150.3 399.8 L1150.8 401.5 L1151.3 403.1 L1151.8 404.6 L1152.3 406.1 L1152.8 407.4 L1153.2 408.7 L1153.6 409.9 L1154.0 411.0 L1154.4 412.1 L1154.7 413.1 L1155.1 414.1 L1155.5 415.0 L1155.9 416.0 L1156.3 416.8 L1156.6 417.7 L1157.0 418.4 L1157.3 419.2 L1157.7 419.8 L1158.1 420.5 L1158.5 421.0 L1158.9 421.6 L1159.3 422.0 L1159.7 422.5 L1160.1 422.8 L1160.6 423.1 L1161.0 423.4 L1161.5 423.6 L1162.0 423.8 L1162.6 423.9 L1163.2 423.9 L1163.8 423.9 L1164.5 423.8 L1165.2 423.7 L1165.8 423.5 L1166.4 423.3 L1167.0 423.0 L1167.5 422.6 L1168.1 422.1 L1168.6 421.5 L1169.1 420.8 L1169.5 420.2 L1169.9 419.6 L1170.2 419.2 L1170.5 418.8" stroke="#58b463" stroke-width="1.1" clip-path="url(#cp)"/>
<path d="M472.0 729.4 L473.9 727.8 L476.5 725.8 L479.5 723.3 L482.9 720.5 L486.5 717.6 L490.1 714.6 L493.7 711.6 L497.0 708.8 L500.1 706.1 L503.3 703.5 L506.4 700.8 L509.5 698.1 L512.7 695.3 L515.9 692.5 L519.2 689.6 L522.6 686.5 L526.1 683.4 L529.7 680.1 L533.3 676.7 L537.0 673.3 L540.7 669.7 L544.5 666.1 L548.2 662.4 L552.0 658.6 L555.8 654.7 L559.5 650.7 L563.3 646.6 L567.1 642.4 L571.0 638.2 L574.9 633.8 L578.8 629.4 L582.8 625.0 L586.9 620.5 L591.0 615.9 L595.1 611.2 L599.3 606.5 L603.5 601.7 L607.8 596.9 L612.2 592.0 L616.6 587.1 L621.1 582.1 L625.7 577.0 L630.3 571.9 L635.0 566.7 L639.7 561.5 L644.5 556.3 L649.2 551.2 L654.0 546.3 L658.8 541.4 L663.6 536.6 L668.5 531.9 L673.4 527.2 L678.3 522.6 L683.2 518.0 L688.1 513.5 L693.0 509.1 L697.9 504.7 L702.9 500.4 L707.8 496.1 L712.8 492.0 L717.7 487.9 L722.7 483.8 L727.7 479.9 L732.6 476.1 L737.5 472.4 L742.5 468.9 L747.5 465.5 L752.4 462.2 L757.4 458.9 L762.3 455.6 L767.2 452.4 L772.0 449.1 L776.8 445.7 L781.5 442.4 L786.2 439.1 L790.9 435.8 L795.5 432.5 L800.2 429.2 L804.9 425.8 L809.6 422.4 L814.4 419.1 L819.2 415.7 L824.0 412.3 L828.9 408.8 L833.7 405.4 L838.6 402.0 L843.3 398.5 L848.0 395.1 L852.6 391.6 L857.2 388.1 L861.6 384.5 L866.1 381.0 L870.6 377.4 L875.0 373.9 L879.5 370.3 L884.0 366.9 L888.6 363.4 L893.2 359.9 L897.8 356.5 L902.4 353.1 L907.0 349.7 L911.6 346.3 L916.2 343.0 L920.7 339.8 L925.2 336.6 L929.6 333.4 L934.1 330.3 L938.5 327.2 L942.9 324.2 L947.2 321.3 L951.5 318.5 L955.8 315.9 L960.0 313.4 L964.2 311.0 L968.3 308.7 L972.4 306.5 L976.4 304.5 L980.5 302.5 L984.5 300.6 L988.6 298.9 L992.7 297.1 L996.8 295.5 L1000.9 293.9 L1005.0 292.4 L1009.0 291.1 L1013.0 289.9 L1017.0 289.0 L1020.8 288.3 L1024.6 287.8 L1028.3 287.5 L1031.9 287.5 L1035.5 287.6 L1039.0 287.9 L1042.5 288.4 L1045.9 289.1 L1049.2 289.9 L1052.5 290.9 L1055.7 292.1 L1058.9 293.5 L1062.0 295.0 L1065.0 296.8 L1068.0 298.7 L1070.9 300.9 L1073.8 303.2 L1076.6 305.8 L1079.4 308.7 L1082.2 311.8 L1084.9 315.1 L1087.5 318.6 L1090.1 322.1 L1092.6 325.8 L1095.0 329.5 L1097.4 333.3 L1099.7 337.2 L1102.0 341.3 L1104.2 345.5 L1106.3 349.7 L1108.4 354.0 L1110.4 358.3 L1112.2 362.6 L1113.9 367.0 L1115.6 371.4 L1117.2 375.8 L1118.7 380.3 L1120.0 384.8 L1121.3 389.3 L1122.6 393.8 L1123.7 398.2 L1124.7 402.7 L1125.6 407.3 L1126.4 411.8 L1127.1 416.3 L1127.7 420.8 L1128.4 425.0 L1129.0 429.1 L1129.7 433.0 L1130.4 436.5 L1131.1 439.9 L1131.8 443.0 L1132.5 446.0 L1133.2 448.9 L1133.9 451.7 L1134.5 454.5 L1135.0 457.2 L1135.5 459.9 L1135.9 462.5 L1136.3 465.0 L1136.7 467.5 L1137.0 469.8 L1137.3 472.1 L1137.7 474.3 L1138.0 476.4 L1138.3 478.6 L1138.7 481.0 L1139.0 483.4 L1139.4 485.7 L1139.7 487.6 L1140.0 489.1 L1140.3 489.9 L1140.5 489.7 L1140.7 488.5 L1140.9 486.2 L1141.0 483.1 L1141.1 479.6 L1141.2 475.9 L1141.4 472.3 L1141.5 469.2 L1141.7 466.8 L1141.9 465.2 L1142.2 463.9 L1142.4 462.9 L1142.7 462.2 L1143.0 461.5 L1143.3 460.9 L1143.6 460.1 L1144.0 459.2 L1144.4 458.1 L1144.8 457.0 L1145.2 455.8 L1145.7 454.6 L1146.2 453.5 L1146.7 452.3 L1147.2 451.2 L1147.7 450.2 L1148.3 449.2 L1148.9 448.2 L1149.6 447.2 L1150.3 446.3 L1151.0 445.4 L1151.6 444.7 L1152.1 444.0 L1152.5 443.6" stroke="#58b463" stroke-width="1.1" clip-path="url(#cp)"/>
<path d="M472.6 647.7 L475.1 645.7 L478.5 643.0 L482.6 639.9 L487.0 636.3 L491.8 632.6 L496.6 628.7 L501.2 624.9 L505.6 621.4 L509.7 618.0 L513.8 614.6 L518.0 611.2 L522.1 607.7 L526.2 604.2 L530.3 600.7 L534.5 597.1 L538.6 593.5 L542.7 589.9 L546.8 586.3 L551.0 582.6 L555.1 578.9 L559.2 575.1 L563.4 571.3 L567.6 567.4 L571.8 563.4 L576.1 559.3 L580.4 555.1 L584.8 550.8 L589.1 546.5 L593.5 542.1 L597.9 537.6 L602.3 533.2 L606.7 528.7 L611.1 524.2 L615.4 519.7 L619.7 515.1 L624.1 510.5 L628.4 505.9 L632.8 501.2 L637.3 496.5 L641.8 491.7 L646.4 486.9 L651.1 482.0 L655.9 477.1 L660.6 472.2 L665.4 467.2 L670.3 462.2 L675.0 457.2 L679.8 452.2 L684.5 447.3 L689.2 442.2 L693.9 437.2 L698.6 432.2 L703.3 427.2 L708.0 422.2 L712.8 417.2 L717.5 412.3 L722.3 407.5 L727.1 402.7 L731.9 398.0 L736.7 393.3 L741.6 388.6 L746.4 384.0 L751.2 379.4 L756.0 374.8 L760.8 370.2 L765.5 365.7 L770.3 361.2 L775.0 356.8 L779.8 352.4 L784.5 348.0 L789.3 343.7 L794.0 339.3 L798.8 335.0 L803.5 330.8 L808.3 326.6 L813.1 322.4 L817.8 318.2 L822.6 314.1 L827.3 310.0 L832.0 306.0 L836.7 302.0 L841.3 297.9 L846.0 294.0 L850.6 290.0 L855.2 286.2 L859.8 282.3 L864.4 278.6 L869.0 274.9 L873.6 271.3 L878.1 267.8 L882.6 264.3 L887.1 260.9 L891.6 257.5 L896.1 254.4 L900.5 251.3 L905.0 248.5 L909.5 245.8 L913.9 243.3 L918.4 240.9 L922.9 238.7 L927.3 236.7 L931.7 234.7 L936.0 232.9 L940.3 231.2 L944.5 229.6 L948.7 228.1 L952.8 226.7 L956.9 225.4 L961.0 224.3 L965.0 223.4 L969.0 222.6 L973.0 222.0 L977.0 221.6 L980.9 221.4 L984.8 221.3 L988.7 221.4 L992.5 221.7 L996.3 222.1 L1000.0 222.7 L1003.7 223.4 L1007.3 224.3 L1010.8 225.3 L1014.3 226.5 L1017.8 227.9 L1021.2 229.4 L1024.5 230.9 L1027.8 232.6 L1031.0 234.3 L1034.2 236.0 L1037.3 237.9 L1040.4 240.0 L1043.4 242.0 L1046.4 244.2 L1049.3 246.3 L1052.2 248.4 L1055.0 250.5 L1057.8 252.6 L1060.6 254.6 L1063.3 256.7 L1066.0 258.7 L1068.6 260.8 L1071.2 262.9 L1073.7 265.0 L1076.2 267.3 L1078.6 269.6 L1080.9 272.0 L1083.2 274.4 L1085.4 276.8 L1087.6 279.3 L1089.7 281.8 L1091.8 284.4 L1093.8 286.9 L1095.8 289.5 L1097.7 292.1 L1099.6 294.7 L1101.4 297.3 L1103.2 300.0 L1105.0 302.6 L1106.8 305.3 L1108.6 308.1 L1110.4 310.8 L1112.2 313.5 L1114.1 316.2 L1115.9 318.9 L1117.6 321.7 L1119.4 324.6 L1121.0 327.6 L1122.6 330.6 L1124.1 333.9 L1125.6 337.3 L1127.0 340.8 L1128.3 344.4 L1129.6 347.9 L1130.9 351.5 L1132.1 355.0 L1133.3 358.4 L1134.5 361.7 L1135.6 364.9 L1136.7 367.9 L1137.8 371.0 L1138.8 374.1 L1139.8 377.3 L1140.8 380.6 L1141.7 384.0 L1142.6 387.8 L1143.5 391.7 L1144.3 395.8 L1145.1 400.0 L1145.8 404.1 L1146.5 408.2 L1147.1 412.1 L1147.7 415.9 L1148.2 419.3 L1148.6 422.7 L1148.9 425.8 L1149.1 428.9 L1149.4 432.0 L1149.6 435.0 L1149.8 438.0 L1150.0 441.0 L1150.2 444.1 L1150.5 447.2 L1150.7 450.3 L1150.9 453.4 L1151.0 456.5 L1151.2 459.4 L1151.4 462.4 L1151.5 465.2 L1151.6 468.2 L1151.7 471.6 L1151.8 475.1 L1151.8 478.5 L1151.9 481.5 L1151.9 483.8 L1152.0 485.3 L1152.0 485.6 L1152.0 484.7 L1152.1 482.7 L1152.1 479.8 L1152.2 476.3 L1152.2 472.4 L1152.2 468.3 L1152.3 464.4 L1152.3 460.8 L1152.3 457.3 L1152.4 453.7 L1152.4 450.0 L1152.4 446.3 L1152.5 442.5 L1152.5 438.8 L1152.5 435.2 L1152.6 431.7 L1152.6 428.3 L1152.7 424.8 L1152.7 421.4 L1152.7 418.0 L1152.8 414.8 L1152.9 411.8 L1153.0 409.1 L1153.2 406.7 L1153.5 404.8 L1153.8 403.3 L1154.1 402.0 L1154.5 401.0 L1155.0 400.1 L1155.4 399.2 L1155.9 398.2 L1156.5 397.0 L1157.1 395.6 L1157.9 394.0 L1158.7 392.3 L1159.6 390.6 L1160.4 388.9 L1161.2 387.5 L1161.8 386.2 L1162.3 385.3" stroke="#58b463" stroke-width="1.1" clip-path="url(#cp)"/>
<path d="M444.4 724.6 L446.0 723.6 L448.2 722.2 L450.8 720.7 L453.7 718.9 L456.7 717.0 L459.8 715.1 L462.8 713.2 L465.6 711.5 L468.2 709.9 L470.8 708.4 L473.4 706.8 L476.1 705.3 L478.7 703.7 L481.3 702.2 L483.9 700.6 L486.6 698.9 L489.3 697.2 L492.0 695.5 L494.8 693.8 L497.5 692.0 L500.3 690.2 L503.1 688.4 L505.8 686.5 L508.6 684.6 L511.3 682.7 L514.1 680.8 L516.8 678.8 L519.5 676.8 L522.2 674.8 L525.0 672.6 L527.8 670.4 L530.6 668.0 L533.5 665.5 L536.4 662.9 L539.4 660.2 L542.4 657.4 L545.4 654.5 L548.5 651.6 L551.5 648.6 L554.6 645.7 L557.7 642.7 L560.8 639.7 L564.0 636.7 L567.2 633.6 L570.4 630.4 L573.6 627.2 L576.8 623.8 L580.0 620.3 L583.2 616.8 L586.3 613.1 L589.4 609.3 L592.6 605.4 L595.7 601.4 L598.9 597.4 L602.2 593.2 L605.6 589.0 L609.1 584.7 L612.7 580.2 L616.3 575.7 L620.0 571.0 L623.8 566.3 L627.5 561.6 L631.3 556.9 L635.0 552.3 L638.7 547.7 L642.4 543.2 L646.1 538.6 L649.8 534.0 L653.6 529.4 L657.3 524.9 L661.2 520.4 L665.0 515.9 L668.9 511.5 L672.8 507.0 L676.8 502.6 L680.8 498.2 L684.9 493.8 L688.9 489.6 L693.0 485.4 L697.0 481.3 L701.0 477.3 L705.1 473.3 L709.2 469.5 L713.2 465.8 L717.3 462.1 L721.4 458.5 L725.5 455.0 L729.6 451.6 L733.7 448.2 L737.8 444.9 L742.0 441.7 L746.1 438.6 L750.3 435.5 L754.4 432.6 L758.5 429.7 L762.6 426.8 L766.7 424.0 L770.8 421.4 L774.9 418.7 L779.0 416.2 L783.0 413.7 L787.1 411.3 L791.0 408.9 L795.0 406.6 L798.9 404.3 L802.8 402.2 L806.6 400.0 L810.4 398.0 L814.1 396.0 L817.9 394.0 L821.7 392.0 L825.4 390.0 L829.1 388.0 L832.9 386.0 L836.6 384.1 L840.3 382.1 L844.1 380.2 L847.7 378.3 L851.4 376.3 L855.0 374.4 L858.6 372.4 L862.1 370.4 L865.6 368.4 L869.1 366.3 L872.6 364.3 L876.1 362.2 L879.5 360.1 L883.0 357.9 L886.5 355.7 L890.0 353.4 L893.4 351.0 L896.9 348.6 L900.4 346.2 L903.9 343.8 L907.3 341.4 L910.8 339.1 L914.3 336.9 L917.7 334.7 L921.2 332.5 L924.7 330.4 L928.1 328.2 L931.6 326.1 L935.0 324.0 L938.4 321.8 L941.8 319.7 L945.2 317.5 L948.6 315.3 L952.0 313.1 L955.4 310.9 L958.8 308.8 L962.1 306.7 L965.3 304.7 L968.5 302.7 L971.6 300.7 L974.7 298.8 L977.7 296.9 L980.7 295.1 L983.7 293.4 L986.8 291.8 L989.9 290.3 L993.1 289.0 L996.3 287.7 L999.6 286.6 L1002.8 285.5 L1006.1 284.6 L1009.3 283.7 L1012.4 283.0 L1015.4 282.3 L1018.3 281.8 L1021.1 281.3 L1023.9 281.0 L1026.6 280.8 L1029.3 280.6 L1031.9 280.5 L1034.5 280.5 L1037.2 280.5 L1039.9 280.6 L1042.5 280.7 L1045.2 280.9 L1047.8 281.1 L1050.4 281.5 L1053.0 281.9 L1055.5 282.5 L1058.0 283.2 L1060.5 284.1 L1062.9 285.1 L1065.3 286.2 L1067.7 287.5 L1070.1 288.9 L1072.4 290.3 L1074.7 291.9 L1077.0 293.5 L1079.2 295.3 L1081.5 297.1 L1083.7 299.1 L1085.8 301.1 L1087.9 303.3 L1090.0 305.5 L1092.0 307.8 L1094.0 310.3 L1095.9 312.8 L1097.8 315.4 L1099.6 318.2 L1101.4 321.0 L1103.1 323.9 L1104.8 326.9 L1106.4 329.9 L1108.0 333.0 L1109.5 336.1 L1111.0 339.3 L1112.4 342.5 L1113.8 345.8 L1115.2 349.2 L1116.5 352.5 L1117.7 355.9 L1119.0 359.3 L1120.2 362.7 L1121.4 366.2 L1122.6 369.8 L1123.8 373.3 L1124.9 376.9 L1125.9 380.4 L1127.0 383.9 L1128.0 387.2 L1129.0 390.5 L1129.9 393.8 L1130.8 397.0 L1131.7 400.2 L1132.5 403.4 L1133.4 406.5 L1134.2 409.5 L1135.0 412.5 L1135.8 415.4 L1136.6 418.3 L1137.4 421.2 L1138.1 424.0 L1138.9 426.7 L1139.6 429.4 L1140.3 432.0 L1141.0 434.4 L1141.7 436.8 L1142.3 439.2 L1143.0 441.6 L1143.6 443.8 L1144.2 445.9 L1144.8 447.8 L1145.4 449.5 L1146.0 450.8 L1146.5 451.9 L1147.0 452.8 L1147.5 453.4 L1148.0 453.8 L1148.5 454.0 L1149.0 454.0 L1149.5 453.8 L1150.0 453.4 L1150.6 452.7 L1151.2 451.7 L1151.8 450.4 L1152.5 449.0 L1153.2 447.5 L1153.8 445.9 L1154.4 444.5 L1155.0 443.2 L1155.5 442.0 L1156.1 440.8 L1156.6 439.6 L1157.1 438.4 L1157.5 437.3 L1158.0 436.2 L1158.5 435.2 L1159.0 434.3 L1159.5 433.5 L1160.1 432.8 L1160.7 432.1 L1161.2 431.4 L1161.8 430.9 L1162.3 430.4 L1162.7 429.9 L1163.0 429.6" stroke="#58b463" stroke-width="1.1" clip-path="url(#cp)"/>
<path d="M519.0 644.6 L519.8 643.9 L520.9 643.1 L522.1 642.1 L523.5 641.0 L525.1 639.7 L526.9 638.2 L528.8 636.7 L530.8 634.9 L533.0 633.0 L535.5 630.8 L538.2 628.5 L541.0 626.0 L543.9 623.4 L546.9 620.7 L549.8 618.1 L552.6 615.4 L555.4 612.8 L558.2 610.1 L561.0 607.3 L563.9 604.5 L566.7 601.6 L569.5 598.8 L572.3 595.9 L575.0 593.1 L577.7 590.3 L580.3 587.4 L582.9 584.6 L585.5 581.7 L588.1 578.9 L590.7 576.0 L593.4 573.1 L596.0 570.2 L598.7 567.2 L601.4 564.3 L604.1 561.3 L606.8 558.3 L609.5 555.3 L612.2 552.4 L615.0 549.4 L617.7 546.4 L620.4 543.4 L623.2 540.3 L626.0 537.3 L628.7 534.3 L631.5 531.3 L634.2 528.3 L637.0 525.3 L639.7 522.3 L642.4 519.3 L645.1 516.4 L647.8 513.4 L650.5 510.5 L653.1 507.6 L655.8 504.7 L658.5 501.8 L661.2 498.8 L663.9 495.9 L666.6 493.0 L669.3 490.1 L672.1 487.1 L674.8 484.2 L677.5 481.3 L680.3 478.5 L683.0 475.7 L685.7 472.9 L688.5 470.2 L691.3 467.5 L694.0 464.8 L696.8 462.2 L699.6 459.6 L702.3 457.0 L705.0 454.4 L707.7 451.9 L710.3 449.3 L712.9 446.8 L715.5 444.4 L718.1 441.9 L720.7 439.4 L723.4 437.0 L726.0 434.5 L728.7 432.0 L731.3 429.6 L734.0 427.1 L736.7 424.6 L739.3 422.2 L742.0 419.7 L744.8 417.3 L747.5 414.9 L750.3 412.5 L753.1 410.0 L755.9 407.6 L758.8 405.2 L761.6 402.8 L764.5 400.5 L767.3 398.2 L770.0 395.9 L772.7 393.7 L775.3 391.6 L777.9 389.6 L780.4 387.6 L783.0 385.5 L785.5 383.5 L788.1 381.5 L790.8 379.3 L793.5 377.2 L796.3 374.9 L799.0 372.6 L801.8 370.3 L804.6 368.1 L807.4 365.8 L810.2 363.6 L813.0 361.4 L815.7 359.3 L818.5 357.2 L821.2 355.2 L824.0 353.2 L826.7 351.2 L829.4 349.3 L832.1 347.3 L834.8 345.3 L837.5 343.3 L840.1 341.3 L842.8 339.4 L845.4 337.4 L848.0 335.4 L850.7 333.4 L853.3 331.4 L856.0 329.4 L858.7 327.4 L861.4 325.3 L864.2 323.3 L867.0 321.2 L869.7 319.1 L872.5 317.1 L875.2 315.0 L878.0 313.1 L880.8 311.1 L883.5 309.2 L886.3 307.3 L889.1 305.4 L891.8 303.6 L894.6 301.7 L897.3 299.9 L900.0 298.1 L902.7 296.2 L905.3 294.4 L907.9 292.6 L910.5 290.8 L913.1 289.0 L915.7 287.2 L918.3 285.5 L921.0 283.7 L923.7 282.0 L926.4 280.2 L929.2 278.5 L931.9 276.8 L934.7 275.1 L937.5 273.4 L940.2 271.9 L943.0 270.4 L945.7 269.0 L948.5 267.7 L951.3 266.5 L954.0 265.3 L956.8 264.2 L959.5 263.1 L962.2 262.1 L964.9 261.0 L967.6 259.9 L970.2 258.9 L972.8 257.9 L975.4 256.9 L978.0 255.9 L980.7 255.1 L983.3 254.2 L986.0 253.4 L988.7 252.7 L991.5 252.0 L994.3 251.4 L997.1 250.8 L999.9 250.3 L1002.7 249.9 L1005.4 249.6 L1008.2 249.4 L1010.9 249.3 L1013.7 249.4 L1016.4 249.5 L1019.1 249.7 L1021.8 250.0 L1024.5 250.4 L1027.2 250.8 L1029.9 251.3 L1032.6 251.9 L1035.2 252.5 L1037.8 253.1 L1040.5 253.9 L1043.1 254.7 L1045.7 255.6 L1048.3 256.7 L1051.0 257.9 L1053.7 259.2 L1056.3 260.6 L1059.0 262.1 L1061.7 263.8 L1064.4 265.6 L1067.1 267.5 L1069.9 269.6 L1072.6 271.9 L1075.4 274.4 L1078.2 277.0 L1081.0 279.7 L1083.8 282.7 L1086.7 285.8 L1089.5 289.2 L1092.3 292.7 L1095.0 296.6 L1097.7 300.6 L1100.3 304.6 L1102.9 308.9 L1105.5 313.3 L1108.1 318.2 L1110.7 323.5 L1113.3 329.4 L1116.0 336.0 L1118.8 343.9 L1121.8 353.2 L1124.9 363.3 L1127.9 373.9 L1130.9 384.3 L1133.6 394.0 L1136.0 402.5 L1138.0 409.2 L1139.5 413.9 L1140.7 417.3 L1141.5 419.5 L1142.1 420.9 L1142.5 421.7 L1143.0 422.3 L1143.4 422.9 L1144.0 424.0 L1144.7 425.2 L1145.4 426.3 L1146.1 427.2 L1146.8 428.0 L1147.4 428.7 L1148.0 429.3 L1148.4 429.8 L1148.8 430.2" stroke="#8e2f33" stroke-width="1.1" clip-path="url(#cp)"/>
<path d="M471.6 639.6 L473.0 639.2 L474.9 638.7 L477.1 638.1 L479.5 637.5 L482.1 636.8 L484.7 636.0 L487.3 635.3 L489.6 634.6 L491.8 633.9 L493.9 633.2 L496.0 632.5 L498.1 631.8 L500.2 631.0 L502.3 630.3 L504.4 629.5 L506.6 628.8 L508.8 628.0 L511.0 627.3 L513.3 626.5 L515.5 625.8 L517.8 625.0 L520.1 624.2 L522.3 623.4 L524.6 622.6 L526.8 621.8 L529.1 621.0 L531.3 620.1 L533.5 619.3 L535.8 618.5 L538.0 617.6 L540.3 616.7 L542.6 615.8 L544.9 614.9 L547.3 613.9 L549.7 613.0 L552.0 612.0 L554.4 611.0 L556.8 610.0 L559.2 608.9 L561.6 607.8 L564.0 606.7 L566.4 605.5 L568.7 604.3 L571.1 603.0 L573.5 601.8 L575.9 600.5 L578.2 599.3 L580.6 598.0 L582.9 596.7 L585.3 595.5 L587.6 594.2 L589.9 592.9 L592.2 591.6 L594.6 590.3 L597.0 589.0 L599.5 587.6 L602.1 586.2 L604.8 584.8 L607.6 583.3 L610.4 581.8 L613.2 580.3 L616.0 578.8 L618.8 577.4 L621.6 576.0 L624.3 574.6 L627.0 573.3 L629.6 572.0 L632.3 570.7 L634.9 569.4 L637.6 568.1 L640.3 566.9 L643.0 565.6 L645.8 564.3 L648.6 563.0 L651.4 561.8 L654.2 560.5 L657.0 559.2 L659.9 558.0 L662.7 556.8 L665.6 555.6 L668.5 554.4 L671.3 553.3 L674.2 552.2 L677.0 551.1 L679.9 550.0 L682.8 549.0 L685.7 548.0 L688.6 547.0 L691.5 546.0 L694.4 545.1 L697.3 544.1 L700.2 543.2 L703.2 542.3 L706.1 541.5 L709.0 540.7 L712.0 540.0 L715.0 539.3 L718.0 538.8 L721.0 538.2 L724.0 537.7 L727.0 537.3 L730.1 536.8 L733.0 536.3 L736.0 535.8 L738.9 535.2 L741.8 534.6 L744.7 534.0 L747.6 533.4 L750.4 532.8 L753.3 532.3 L756.1 531.8 L759.0 531.4 L761.9 531.1 L764.8 530.8 L767.6 530.6 L770.5 530.5 L773.4 530.4 L776.2 530.3 L779.1 530.1 L782.0 530.0 L784.9 529.8 L787.8 529.7 L790.6 529.5 L793.5 529.3 L796.4 529.2 L799.2 529.0 L802.1 528.9 L805.0 528.8 L807.9 528.7 L810.8 528.7 L813.7 528.8 L816.6 528.8 L819.5 528.8 L822.3 528.8 L825.2 528.8 L828.0 528.8 L830.8 528.7 L833.5 528.6 L836.2 528.4 L838.9 528.3 L841.6 528.1 L844.2 528.0 L846.9 527.9 L849.6 527.8 L852.3 527.8 L855.0 527.8 L857.6 527.8 L860.3 527.9 L862.9 528.0 L865.6 528.0 L868.3 528.0 L871.0 528.0 L873.7 527.9 L876.5 527.8 L879.3 527.6 L882.0 527.4 L884.8 527.2 L887.6 527.1 L890.3 526.9 L893.0 526.8 L895.6 526.7 L898.3 526.6 L900.8 526.6 L903.4 526.5 L906.0 526.5 L908.5 526.5 L911.0 526.5 L913.6 526.6 L916.2 526.7 L918.7 526.9 L921.3 527.0 L923.9 527.3 L926.4 527.5 L929.0 527.7 L931.5 527.9 L934.0 528.0 L936.5 528.1 L939.0 528.2 L941.5 528.2 L943.9 528.2 L946.4 528.2 L948.8 528.3 L951.3 528.4 L953.7 528.6 L956.1 528.8 L958.5 529.1 L960.9 529.5 L963.3 529.9 L965.7 530.3 L968.1 530.7 L970.6 531.1 L973.0 531.5 L975.5 531.9 L978.0 532.3 L980.5 532.7 L983.0 533.1 L985.5 533.6 L988.1 534.0 L990.5 534.6 L993.0 535.2 L995.4 535.9 L997.8 536.7 L1000.2 537.5 L1002.6 538.4 L1005.0 539.3 L1007.3 540.2 L1009.7 541.1 L1012.0 542.0 L1014.3 542.8 L1016.5 543.6 L1018.7 544.4 L1020.9 545.2 L1023.2 546.0 L1025.4 546.8 L1027.7 547.6 L1030.0 548.5 L1032.4 549.4 L1034.8 550.2 L1037.2 551.0 L1039.6 551.8 L1042.1 552.7 L1044.6 553.7 L1047.2 554.8 L1049.8 556.0 L1052.5 557.4 L1055.3 558.9 L1058.1 560.5 L1061.0 562.2 L1063.9 564.0 L1066.7 565.7 L1069.4 567.5 L1072.0 569.3 L1074.5 571.1 L1076.9 572.9 L1079.2 574.7 L1081.5 576.5 L1083.7 578.4 L1085.8 580.3 L1087.9 582.1 L1090.0 584.0 L1092.0 585.9 L1094.0 587.7 L1096.0 589.6 L1097.9 591.5 L1099.7 593.4 L1101.5 595.2 L1103.3 597.1 L1105.0 599.0 L1106.7 600.9 L1108.3 602.8 L1109.8 604.6 L1111.3 606.5 L1112.8 608.4 L1114.2 610.2 L1115.6 612.1 L1117.0 614.0 L1118.4 615.9 L1119.7 617.8 L1121.0 619.7 L1122.3 621.6 L1123.6 623.4 L1124.8 625.3 L1125.9 627.2 L1127.0 629.0 L1128.0 630.8 L1129.0 632.6 L1129.9 634.4 L1130.8 636.1 L1131.7 637.9 L1132.5 639.6 L1133.2 641.3 L1134.0 643.0 L1134.7 644.7 L1135.4 646.3 L1136.1 648.0 L1136.8 649.6 L1137.4 651.2 L1138.0 652.8 L1138.5 654.4 L1139.0 656.0 L1139.4 657.5 L1139.8 659.0 L1140.2 660.5 L1140.5 661.9 L1140.8 663.4 L1141.0 664.9 L1141.3 666.4 L1141.5 668.0 L1141.7 669.6 L1141.9 671.3 L1142.0 672.9 L1142.2 674.6 L1142.3 676.4 L1142.4 678.2 L1142.5 680.0 L1142.6 682.0 L1142.7 684.2 L1142.8 686.6 L1142.8 689.2 L1142.9 691.9 L1142.9 694.4 L1142.9 696.7 L1143.0 698.6 L1143.0 700.0" stroke="#0a0a58" stroke-width="1.2" clip-path="url(#cp)"/>
<path d="M471.6 636.2l3.4 3.4l-3.4 3.4l-3.4 -3.4z M489.6 631.2l3.4 3.4l-3.4 3.4l-3.4 -3.4z M506.6 625.4l3.4 3.4l-3.4 3.4l-3.4 -3.4z M524.6 619.2l3.4 3.4l-3.4 3.4l-3.4 -3.4z M542.6 612.4l3.4 3.4l-3.4 3.4l-3.4 -3.4z M561.6 604.4l3.4 3.4l-3.4 3.4l-3.4 -3.4z M580.6 594.6l3.4 3.4l-3.4 3.4l-3.4 -3.4z M599.5 584.2l3.4 3.4l-3.4 3.4l-3.4 -3.4z M621.6 572.6l3.4 3.4l-3.4 3.4l-3.4 -3.4z M643.0 562.2l3.4 3.4l-3.4 3.4l-3.4 -3.4z M665.6 552.2l3.4 3.4l-3.4 3.4l-3.4 -3.4z M688.6 543.6l3.4 3.4l-3.4 3.4l-3.4 -3.4z M712.0 536.6l3.4 3.4l-3.4 3.4l-3.4 -3.4z M736.0 532.4l3.4 3.4l-3.4 3.4l-3.4 -3.4z M759.0 528.0l3.4 3.4l-3.4 3.4l-3.4 -3.4z M782.0 526.6l3.4 3.4l-3.4 3.4l-3.4 -3.4z M805.0 525.4l3.4 3.4l-3.4 3.4l-3.4 -3.4z M828.0 525.4l3.4 3.4l-3.4 3.4l-3.4 -3.4z M849.6 524.4l3.4 3.4l-3.4 3.4l-3.4 -3.4z M871.0 524.6l3.4 3.4l-3.4 3.4l-3.4 -3.4z M893.0 523.4l3.4 3.4l-3.4 3.4l-3.4 -3.4z M913.6 523.2l3.4 3.4l-3.4 3.4l-3.4 -3.4z M934.0 524.6l3.4 3.4l-3.4 3.4l-3.4 -3.4z M953.7 525.2l3.4 3.4l-3.4 3.4l-3.4 -3.4z M973.0 528.1l3.4 3.4l-3.4 3.4l-3.4 -3.4z M993.0 531.8l3.4 3.4l-3.4 3.4l-3.4 -3.4z M1012.0 538.6l3.4 3.4l-3.4 3.4l-3.4 -3.4z M1030.0 545.1l3.4 3.4l-3.4 3.4l-3.4 -3.4z M1049.8 552.6l3.4 3.4l-3.4 3.4l-3.4 -3.4z M1072.0 565.9l3.4 3.4l-3.4 3.4l-3.4 -3.4z M1090.0 580.6l3.4 3.4l-3.4 3.4l-3.4 -3.4z M1105.0 595.6l3.4 3.4l-3.4 3.4l-3.4 -3.4z M1117.0 610.6l3.4 3.4l-3.4 3.4l-3.4 -3.4z M1127.0 625.6l3.4 3.4l-3.4 3.4l-3.4 -3.4z M1134.0 639.6l3.4 3.4l-3.4 3.4l-3.4 -3.4z M1139.0 652.6l3.4 3.4l-3.4 3.4l-3.4 -3.4z M1141.5 664.6l3.4 3.4l-3.4 3.4l-3.4 -3.4z M1141.7 667.0l3.4 3.4l-3.4 3.4l-3.4 -3.4z M1141.9 669.4l3.4 3.4l-3.4 3.4l-3.4 -3.4z M1142.1 671.8l3.4 3.4l-3.4 3.4l-3.4 -3.4z M1142.3 674.2l3.4 3.4l-3.4 3.4l-3.4 -3.4z M1142.5 676.6l3.4 3.4l-3.4 3.4l-3.4 -3.4z M1142.6 679.0l3.4 3.4l-3.4 3.4l-3.4 -3.4z M1142.7 681.4l3.4 3.4l-3.4 3.4l-3.4 -3.4z M1142.8 683.8l3.4 3.4l-3.4 3.4l-3.4 -3.4z M1142.8 686.2l3.4 3.4l-3.4 3.4l-3.4 -3.4z M1142.9 688.6l3.4 3.4l-3.4 3.4l-3.4 -3.4z M1142.9 691.0l3.4 3.4l-3.4 3.4l-3.4 -3.4z M1142.9 693.4l3.4 3.4l-3.4 3.4l-3.4 -3.4z M1143.0 695.8l3.4 3.4l-3.4 3.4l-3.4 -3.4z" fill="#1010c4" stroke="none" clip-path="url(#cp2)"/>
<path d="M560.0 618.5 L560.3 618.3 L560.5 618.2 L560.7 618.0 L561.0 617.8 L561.5 617.4 L562.4 616.9 L563.7 616.1 L565.6 615.0 L568.1 613.6 L571.2 611.8 L574.8 609.7 L578.6 607.5 L582.7 605.2 L586.8 602.9 L590.8 600.7 L594.6 598.6 L598.2 596.7 L601.8 594.9 L605.4 593.1 L609.0 591.3 L612.6 589.5 L616.3 587.7 L620.0 585.9 L623.8 584.0 L627.7 582.0 L631.6 580.0 L635.7 578.0 L639.7 575.9 L643.8 573.9 L647.9 571.9 L652.0 569.9 L656.0 568.0 L660.0 566.2 L664.0 564.4 L667.9 562.6 L671.9 560.9 L675.9 559.3 L679.9 557.6 L683.9 556.1 L688.0 554.6 L692.1 553.2 L696.3 551.7 L700.5 550.4 L704.8 549.1 L709.1 547.8 L713.4 546.7 L717.7 545.6 L722.0 544.6 L726.4 543.7 L730.8 542.9 L735.2 542.2 L739.7 541.6 L744.2 541.0 L748.6 540.5 L753.0 540.0 L757.4 539.6 L761.7 539.2 L766.0 538.9 L770.3 538.6 L774.6 538.4 L778.8 538.3 L783.0 538.1 L787.2 538.1 L791.3 538.0 L795.4 538.0 L799.4 538.1 L803.3 538.2 L807.3 538.4 L811.2 538.5 L815.1 538.7 L819.0 538.9 L823.0 539.0 L827.0 539.1 L831.0 539.2 L835.1 539.3 L839.1 539.5 L843.1 539.6 L847.1 539.7 L851.1 539.7 L855.0 539.8 L858.8 539.8 L862.6 539.9 L866.4 539.9 L870.1 539.9 L873.8 539.9 L877.5 539.9 L881.3 539.8 L885.0 539.8 L888.8 539.7 L892.5 539.7 L896.3 539.6 L900.1 539.5 L903.8 539.4 L907.6 539.3 L911.3 539.2 L915.0 539.0 L918.7 538.8 L922.3 538.4 L926.0 538.1 L929.6 537.7 L933.2 537.4 L936.8 537.1 L940.4 536.8 L944.0 536.7 L947.6 536.7 L951.1 536.7 L954.7 536.8 L958.2 537.0 L961.7 537.2 L965.2 537.4 L968.6 537.7 L972.0 538.0 L975.4 538.3 L978.7 538.7 L982.0 539.1 L985.2 539.5 L988.5 539.9 L991.7 540.4 L994.9 541.0 L998.0 541.5 L1001.1 542.1 L1004.2 542.7 L1007.2 543.3 L1010.2 543.9 L1013.2 544.6 L1016.2 545.4 L1019.1 546.2 L1022.0 547.0 L1024.9 547.9 L1027.7 548.8 L1030.5 549.8 L1033.2 550.9 L1036.0 552.0 L1038.7 553.1 L1041.4 554.3 L1044.0 555.5 L1046.6 556.8 L1049.2 558.1 L1051.7 559.5 L1054.2 560.9 L1056.7 562.4 L1059.2 563.9 L1061.6 565.4 L1064.0 567.0 L1066.4 568.6 L1068.7 570.3 L1071.0 572.0 L1073.3 573.8 L1075.6 575.6 L1077.8 577.4 L1079.9 579.2 L1082.0 581.0 L1084.0 582.8 L1086.0 584.7 L1087.9 586.5 L1089.8 588.4 L1091.7 590.3 L1093.5 592.2 L1095.2 594.1 L1097.0 596.0 L1098.7 598.0 L1100.4 599.9 L1102.1 601.9 L1103.8 603.9 L1105.4 606.0 L1106.9 608.0 L1108.5 610.0 L1110.0 612.0 L1111.5 614.0 L1112.9 616.0 L1114.4 618.0 L1115.8 620.0 L1117.1 622.0 L1118.4 624.0 L1119.7 626.0 L1121.0 628.0 L1122.2 630.0 L1123.4 632.0 L1124.6 634.0 L1125.8 636.0 L1126.9 638.0 L1127.9 640.0 L1129.0 642.0 L1130.0 644.0 L1131.0 646.0 L1132.0 648.1 L1132.9 650.2 L1133.8 652.2 L1134.7 654.3 L1135.5 656.3 L1136.3 658.2 L1137.0 660.0 L1137.6 661.8 L1138.2 663.5 L1138.7 665.3 L1139.1 666.9 L1139.6 668.5 L1140.0 669.9 L1140.5 671.2 L1141.0 672.3 L1141.5 673.2 L1142.1 673.9 L1142.7 674.5 L1143.3 675.0 L1143.9 675.3 L1144.4 675.6 L1145.0 675.9 L1145.6 676.1 L1146.1 676.3 L1146.7 676.4 L1147.2 676.5 L1147.7 676.5 L1148.2 676.4 L1148.8 676.4 L1149.4 676.3 L1150.0 676.2 L1150.7 676.1 L1151.4 675.9 L1152.2 675.7 L1153.0 675.5 L1153.8 675.3 L1154.6 675.0 L1155.3 674.8 L1156.0 674.6 L1156.6 674.4 L1157.1 674.2 L1157.7 674.0 L1158.1 673.8 L1158.6 673.6 L1159.1 673.4 L1159.5 673.2 L1160.0 673.0 L1160.5 672.8 L1160.9 672.5 L1161.4 672.3 L1161.9 672.0 L1162.3 671.8 L1162.8 671.6 L1163.2 671.5 L1163.7 671.4 L1164.2 671.4 L1164.7 671.4 L1165.2 671.4 L1165.7 671.5 L1166.1 671.6 L1166.6 671.8 L1167.1 672.0 L1167.5 672.3 L1167.9 672.6 L1168.2 673.0 L1168.6 673.4 L1168.9 673.8 L1169.2 674.3 L1169.6 674.8 L1170.0 675.4 L1170.4 676.0 L1170.9 676.7 L1171.5 677.6 L1172.2 678.5 L1172.9 679.5 L1173.5 680.4 L1174.1 681.3 L1174.6 682.0 L1175.0 682.5" stroke="#0a0a58" stroke-width="1.2" clip-path="url(#cp)"/>
<path d="M565.6 611.6l3.4 3.4l-3.4 3.4l-3.4 -3.4z M594.6 595.2l3.4 3.4l-3.4 3.4l-3.4 -3.4z M623.8 580.6l3.4 3.4l-3.4 3.4l-3.4 -3.4z M656.0 564.6l3.4 3.4l-3.4 3.4l-3.4 -3.4z M688.0 551.2l3.4 3.4l-3.4 3.4l-3.4 -3.4z M722.0 541.2l3.4 3.4l-3.4 3.4l-3.4 -3.4z M757.4 536.2l3.4 3.4l-3.4 3.4l-3.4 -3.4z M791.3 534.6l3.4 3.4l-3.4 3.4l-3.4 -3.4z M823.0 535.6l3.4 3.4l-3.4 3.4l-3.4 -3.4z M855.0 536.4l3.4 3.4l-3.4 3.4l-3.4 -3.4z M885.0 536.4l3.4 3.4l-3.4 3.4l-3.4 -3.4z M915.0 535.6l3.4 3.4l-3.4 3.4l-3.4 -3.4z M944.0 533.3l3.4 3.4l-3.4 3.4l-3.4 -3.4z M972.0 534.6l3.4 3.4l-3.4 3.4l-3.4 -3.4z M998.0 538.1l3.4 3.4l-3.4 3.4l-3.4 -3.4z M1022.0 543.6l3.4 3.4l-3.4 3.4l-3.4 -3.4z M1044.0 552.1l3.4 3.4l-3.4 3.4l-3.4 -3.4z M1064.0 563.6l3.4 3.4l-3.4 3.4l-3.4 -3.4z M1082.0 577.6l3.4 3.4l-3.4 3.4l-3.4 -3.4z M1097.0 592.6l3.4 3.4l-3.4 3.4l-3.4 -3.4z M1110.0 608.6l3.4 3.4l-3.4 3.4l-3.4 -3.4z M1121.0 624.6l3.4 3.4l-3.4 3.4l-3.4 -3.4z M1130.0 640.6l3.4 3.4l-3.4 3.4l-3.4 -3.4z M1137.0 656.6l3.4 3.4l-3.4 3.4l-3.4 -3.4z M1141.0 668.9l3.4 3.4l-3.4 3.4l-3.4 -3.4z M1144.3 671.9l3.4 3.4l-3.4 3.4l-3.4 -3.4z M1148.6 672.9l3.4 3.4l-3.4 3.4l-3.4 -3.4z M1151.7 672.4l3.4 3.4l-3.4 3.4l-3.4 -3.4z M1153.5 671.9l3.4 3.4l-3.4 3.4l-3.4 -3.4z M1155.2 671.4l3.4 3.4l-3.4 3.4l-3.4 -3.4z M1156.9 670.9l3.4 3.4l-3.4 3.4l-3.4 -3.4z M1158.6 670.2l3.4 3.4l-3.4 3.4l-3.4 -3.4z M1160.3 669.5l3.4 3.4l-3.4 3.4l-3.4 -3.4z M1161.8 668.7l3.4 3.4l-3.4 3.4l-3.4 -3.4z M1163.5 668.0l3.4 3.4l-3.4 3.4l-3.4 -3.4z M1165.3 668.1l3.4 3.4l-3.4 3.4l-3.4 -3.4z M1167.0 668.6l3.4 3.4l-3.4 3.4l-3.4 -3.4z M1168.4 669.8l3.4 3.4l-3.4 3.4l-3.4 -3.4z M1169.4 671.2l3.4 3.4l-3.4 3.4l-3.4 -3.4z M1170.5 672.7l3.4 3.4l-3.4 3.4l-3.4 -3.4z M1171.5 674.2l3.4 3.4l-3.4 3.4l-3.4 -3.4z M1172.6 675.6l3.4 3.4l-3.4 3.4l-3.4 -3.4z M1173.6 677.1l3.4 3.4l-3.4 3.4l-3.4 -3.4z M1174.6 678.6l3.4 3.4l-3.4 3.4l-3.4 -3.4z" fill="#1010c4" stroke="none" clip-path="url(#cp2)"/>
<path d="M662.6 509.6 L665.8 509.5 L670.1 509.3 L675.2 509.1 L680.9 508.9 L686.9 508.7 L692.9 508.6 L698.7 508.5 L704.0 508.6 L709.0 508.8 L713.9 509.1 L718.7 509.5 L723.5 509.9 L728.3 510.4 L733.0 510.9 L737.8 511.5 L742.6 512.0 L747.4 512.5 L752.3 513.1 L757.2 513.7 L762.0 514.4 L766.9 515.0 L771.7 515.7 L776.4 516.3 L781.0 517.0 L785.5 517.7 L790.0 518.4 L794.4 519.2 L798.8 519.9 L803.1 520.6 L807.4 521.4 L811.6 522.1 L815.9 522.8 L820.2 523.5 L824.4 524.2 L828.6 524.9 L832.8 525.5 L837.0 526.2 L841.1 526.8 L845.2 527.3 L849.3 527.8 L853.3 528.2 L857.3 528.6 L861.3 528.9 L865.3 529.2 L869.2 529.5 L873.1 529.7 L877.0 529.9 L880.9 530.1 L884.8 530.3 L888.7 530.4 L892.5 530.6 L896.4 530.7 L900.2 530.8 L904.1 530.9 L907.9 530.9 L911.8 531.0 L915.7 531.0 L919.6 531.0 L923.6 531.0 L927.5 531.0 L931.4 530.9 L935.3 530.9 L939.2 530.9 L943.0 531.0 L946.7 531.1 L950.5 531.2 L954.1 531.3 L957.8 531.5 L961.4 531.7 L964.9 531.9 L968.5 532.2 L972.0 532.5 L975.5 532.9 L978.9 533.4 L982.4 533.9 L985.8 534.4 L989.1 535.0 L992.4 535.6 L995.7 536.3 L999.0 537.0 L1002.2 537.7 L1005.4 538.5 L1008.6 539.3 L1011.8 540.2 L1014.9 541.1 L1017.9 542.0 L1021.0 543.0 L1024.0 544.0 L1027.0 545.1 L1029.9 546.1 L1032.9 547.3 L1035.8 548.4 L1038.6 549.6 L1041.4 550.9 L1044.2 552.2 L1047.0 553.5 L1049.7 554.9 L1052.5 556.3 L1055.2 557.8 L1057.8 559.2 L1060.4 560.8 L1063.0 562.3 L1065.5 563.9 L1068.0 565.5 L1070.4 567.1 L1072.8 568.7 L1075.1 570.4 L1077.4 572.1 L1079.6 573.8 L1081.8 575.5 L1083.9 577.3 L1086.0 579.0 L1088.0 580.8 L1090.0 582.5 L1091.9 584.3 L1093.8 586.1 L1095.7 587.9 L1097.5 589.8 L1099.2 591.6 L1101.0 593.5 L1102.7 595.4 L1104.4 597.3 L1106.1 599.2 L1107.8 601.2 L1109.4 603.1 L1110.9 605.1 L1112.5 607.0 L1114.0 609.0 L1115.5 611.0 L1116.9 613.0 L1118.4 615.0 L1119.8 617.0 L1121.1 619.0 L1122.4 621.0 L1123.7 623.0 L1125.0 625.0 L1126.2 627.0 L1127.4 629.0 L1128.6 631.1 L1129.8 633.1 L1130.9 635.1 L1131.9 637.1 L1133.0 639.1 L1134.0 641.0 L1135.0 642.9 L1135.9 644.7 L1136.9 646.6 L1137.8 648.4 L1138.6 650.1 L1139.4 651.8 L1140.2 653.5 L1141.0 655.0 L1141.7 656.5 L1142.5 657.9 L1143.2 659.2 L1143.8 660.4 L1144.4 661.6 L1145.0 662.8 L1145.5 663.9 L1146.0 665.0 L1146.4 666.1 L1146.8 667.1 L1147.1 668.2 L1147.3 669.1 L1147.5 670.0 L1147.7 670.8 L1147.9 671.5 L1148.0 672.0" stroke="#0a0a58" stroke-width="1.2" clip-path="url(#cp)"/>
<path d="M662.6 506.2l3.4 3.4l-3.4 3.4l-3.4 -3.4z M704.0 505.2l3.4 3.4l-3.4 3.4l-3.4 -3.4z M742.6 508.6l3.4 3.4l-3.4 3.4l-3.4 -3.4z M781.0 513.6l3.4 3.4l-3.4 3.4l-3.4 -3.4z M815.9 519.4l3.4 3.4l-3.4 3.4l-3.4 -3.4z M849.3 524.4l3.4 3.4l-3.4 3.4l-3.4 -3.4z M880.9 526.7l3.4 3.4l-3.4 3.4l-3.4 -3.4z M911.8 527.6l3.4 3.4l-3.4 3.4l-3.4 -3.4z M943.0 527.6l3.4 3.4l-3.4 3.4l-3.4 -3.4z M972.0 529.1l3.4 3.4l-3.4 3.4l-3.4 -3.4z M999.0 533.6l3.4 3.4l-3.4 3.4l-3.4 -3.4z M1024.0 540.6l3.4 3.4l-3.4 3.4l-3.4 -3.4z M1047.0 550.1l3.4 3.4l-3.4 3.4l-3.4 -3.4z M1068.0 562.1l3.4 3.4l-3.4 3.4l-3.4 -3.4z M1086.0 575.6l3.4 3.4l-3.4 3.4l-3.4 -3.4z M1101.0 590.1l3.4 3.4l-3.4 3.4l-3.4 -3.4z M1114.0 605.6l3.4 3.4l-3.4 3.4l-3.4 -3.4z M1125.0 621.6l3.4 3.4l-3.4 3.4l-3.4 -3.4z M1134.0 637.6l3.4 3.4l-3.4 3.4l-3.4 -3.4z M1141.0 651.6l3.4 3.4l-3.4 3.4l-3.4 -3.4z M1146.0 661.6l3.4 3.4l-3.4 3.4l-3.4 -3.4z M1148.0 668.6l3.4 3.4l-3.4 3.4l-3.4 -3.4z" fill="#1010c4" stroke="none" clip-path="url(#cp2)"/>
<path d="M596.0 588.5 L596.2 588.4 L596.3 588.4 L596.5 588.3 L596.7 588.2 L597.2 588.0 L598.0 587.8 L599.2 587.5 L601.0 587.0 L603.4 586.4 L606.4 585.7 L609.8 584.9 L613.5 584.0 L617.5 583.0 L621.5 582.0 L625.5 581.0 L629.4 580.0 L633.2 579.0 L637.1 577.8 L641.0 576.7 L645.0 575.5 L649.0 574.3 L653.0 573.2 L657.0 572.1 L661.0 571.0 L665.0 570.0 L669.0 569.1 L673.0 568.2 L677.0 567.3 L681.0 566.4 L685.0 565.5 L689.0 564.7 L693.0 563.8 L697.0 562.9 L701.0 562.0 L705.0 561.1 L709.0 560.2 L713.0 559.4 L717.0 558.5 L721.0 557.7 L725.0 557.0 L729.0 556.3 L733.0 555.7 L737.0 555.2 L741.0 554.6 L745.0 554.1 L749.0 553.6 L753.0 553.1 L757.0 552.6 L761.0 552.1 L765.0 551.5 L769.0 551.0 L773.0 550.4 L777.0 549.9 L781.0 549.4 L785.0 549.0 L789.0 548.6 L793.0 548.3 L797.0 548.0 L801.1 547.7 L805.1 547.5 L809.1 547.3 L813.1 547.1 L817.1 547.0 L821.0 546.8 L824.8 546.6 L828.6 546.5 L832.4 546.4 L836.1 546.3 L839.8 546.2 L843.5 546.1 L847.3 546.0 L851.0 545.9 L854.8 545.8 L858.5 545.6 L862.2 545.5 L866.0 545.3 L869.8 545.2 L873.5 545.1 L877.2 545.0 L881.0 544.9 L884.8 544.9 L888.5 544.8 L892.3 544.8 L896.1 544.8 L899.8 544.8 L903.6 544.9 L907.3 544.9 L911.0 545.0 L914.7 545.1 L918.3 545.2 L922.0 545.3 L925.6 545.4 L929.2 545.5 L932.8 545.7 L936.4 545.8 L940.0 546.0 L943.6 546.2 L947.1 546.3 L950.7 546.5 L954.2 546.7 L957.8 546.9 L961.2 547.1 L964.7 547.3 L968.0 547.5 L971.3 547.7 L974.5 547.9 L977.7 548.1 L980.8 548.3 L983.9 548.5 L987.0 548.7 L990.0 549.0 L993.0 549.3 L996.0 549.6 L999.1 550.0 L1002.1 550.4 L1005.1 550.8 L1008.0 551.3 L1010.8 551.7 L1013.4 552.1 L1015.8 552.5 L1018.0 552.9 L1020.0 553.2 L1021.8 553.6 L1023.5 553.9 L1025.1 554.3 L1026.7 554.6 L1028.3 555.1 L1030.0 555.5 L1031.7 555.9 L1033.4 556.4 L1035.0 556.8 L1036.7 557.3 L1038.3 557.8 L1040.0 558.4 L1041.6 559.1 L1043.3 560.0 L1045.0 561.0 L1046.7 562.2 L1048.4 563.5 L1050.1 564.9 L1051.8 566.4 L1053.5 567.9 L1055.1 569.3 L1056.8 570.8 L1058.5 572.3 L1060.1 573.8 L1061.8 575.3 L1063.4 576.8 L1065.1 578.4 L1066.7 579.9 L1068.3 581.5 L1069.8 583.0 L1071.3 584.5 L1072.8 586.0 L1074.2 587.5 L1075.7 588.9 L1077.1 590.4 L1078.5 591.9 L1079.8 593.3 L1081.2 594.8 L1082.5 596.2 L1083.8 597.7 L1085.1 599.1 L1086.4 600.6 L1087.7 602.0 L1088.9 603.4 L1090.1 604.8 L1091.3 606.2 L1092.5 607.6 L1093.7 608.9 L1094.8 610.3 L1096.0 611.6 L1097.1 612.9 L1098.2 614.2 L1099.2 615.5 L1100.2 616.8 L1101.1 618.1 L1102.0 619.5 L1102.8 620.8 L1103.6 622.1 L1104.4 623.4 L1105.2 624.7 L1106.0 625.9 L1106.8 627.0 L1107.7 628.0 L1108.6 629.0 L1109.5 629.9 L1110.5 630.8 L1111.4 631.7 L1112.3 632.5 L1113.2 633.2 L1114.0 634.0 L1114.8 634.7 L1115.4 635.4 L1116.1 636.0 L1116.7 636.6 L1117.4 637.1 L1118.0 637.7 L1118.7 638.3 L1119.4 639.0 L1120.2 639.7 L1121.0 640.5 L1121.8 641.3 L1122.7 642.1 L1123.5 642.9 L1124.4 643.7 L1125.2 644.4 L1126.0 645.0 L1126.8 645.6 L1127.5 646.1 L1128.2 646.6 L1129.0 647.0 L1129.7 647.4 L1130.4 647.8 L1131.2 648.2 L1132.0 648.5 L1132.8 648.7 L1133.7 648.9 L1134.6 649.0 L1135.6 649.0 L1136.5 649.1 L1137.4 649.3 L1138.2 649.6 L1139.0 650.0 L1139.7 650.6 L1140.4 651.3 L1141.1 652.1 L1141.7 653.0 L1142.3 654.0 L1142.9 655.0 L1143.4 656.0 L1144.0 657.0 L1144.6 658.0 L1145.1 659.2 L1145.6 660.3 L1146.1 661.5 L1146.6 662.7 L1147.1 663.9 L1147.6 665.0 L1148.0 666.0 L1148.4 667.0 L1148.8 667.9 L1149.2 668.8 L1149.5 669.7 L1149.8 670.6 L1150.2 671.3 L1150.6 672.0 L1151.0 672.5 L1151.4 672.9 L1151.9 673.3 L1152.3 673.5 L1152.8 673.6 L1153.3 673.7 L1153.8 673.8 L1154.4 673.8 L1155.0 673.8 L1155.7 673.7 L1156.6 673.6 L1157.5 673.4 L1158.5 673.2 L1159.4 673.0 L1160.3 672.7 L1161.1 672.5 L1161.8 672.3 L1162.3 672.1 L1162.8 671.8 L1163.2 671.6 L1163.5 671.3 L1163.8 671.1 L1164.0 670.9 L1164.3 670.9 L1164.7 671.0 L1165.1 671.3 L1165.6 671.7 L1166.1 672.3 L1166.5 672.9 L1167.0 673.6 L1167.4 674.2 L1167.7 674.7 L1168.0 675.0" stroke="#0a0a58" stroke-width="1.2" clip-path="url(#cp)"/>
<path d="M601.0 583.6l3.4 3.4l-3.4 3.4l-3.4 -3.4z M629.4 576.6l3.4 3.4l-3.4 3.4l-3.4 -3.4z M661.0 567.6l3.4 3.4l-3.4 3.4l-3.4 -3.4z M693.0 560.4l3.4 3.4l-3.4 3.4l-3.4 -3.4z M725.0 553.6l3.4 3.4l-3.4 3.4l-3.4 -3.4z M757.0 549.2l3.4 3.4l-3.4 3.4l-3.4 -3.4z M789.0 545.2l3.4 3.4l-3.4 3.4l-3.4 -3.4z M821.0 543.4l3.4 3.4l-3.4 3.4l-3.4 -3.4z M851.0 542.5l3.4 3.4l-3.4 3.4l-3.4 -3.4z M881.0 541.5l3.4 3.4l-3.4 3.4l-3.4 -3.4z M911.0 541.6l3.4 3.4l-3.4 3.4l-3.4 -3.4z M940.0 542.6l3.4 3.4l-3.4 3.4l-3.4 -3.4z M968.0 544.1l3.4 3.4l-3.4 3.4l-3.4 -3.4z M993.0 545.9l3.4 3.4l-3.4 3.4l-3.4 -3.4z M1015.8 549.1l3.4 3.4l-3.4 3.4l-3.4 -3.4z M1030.0 552.1l3.4 3.4l-3.4 3.4l-3.4 -3.4z M1043.3 556.6l3.4 3.4l-3.4 3.4l-3.4 -3.4z M1056.8 567.4l3.4 3.4l-3.4 3.4l-3.4 -3.4z M1069.8 579.6l3.4 3.4l-3.4 3.4l-3.4 -3.4z M1081.2 591.4l3.4 3.4l-3.4 3.4l-3.4 -3.4z M1091.3 602.8l3.4 3.4l-3.4 3.4l-3.4 -3.4z M1100.2 613.4l3.4 3.4l-3.4 3.4l-3.4 -3.4z M1106.8 623.6l3.4 3.4l-3.4 3.4l-3.4 -3.4z M1114.0 630.6l3.4 3.4l-3.4 3.4l-3.4 -3.4z M1119.4 635.6l3.4 3.4l-3.4 3.4l-3.4 -3.4z M1126.0 641.6l3.4 3.4l-3.4 3.4l-3.4 -3.4z M1132.0 645.1l3.4 3.4l-3.4 3.4l-3.4 -3.4z M1139.0 646.6l3.4 3.4l-3.4 3.4l-3.4 -3.4z M1142.0 650.6l3.4 3.4l-3.4 3.4l-3.4 -3.4z M1144.6 654.8l3.4 3.4l-3.4 3.4l-3.4 -3.4z M1146.7 659.4l3.4 3.4l-3.4 3.4l-3.4 -3.4z M1148.6 664.0l3.4 3.4l-3.4 3.4l-3.4 -3.4z M1150.7 668.5l3.4 3.4l-3.4 3.4l-3.4 -3.4z M1153.0 670.0l3.4 3.4l-3.4 3.4l-3.4 -3.4z M1155.2 670.4l3.4 3.4l-3.4 3.4l-3.4 -3.4z M1157.3 670.1l3.4 3.4l-3.4 3.4l-3.4 -3.4z M1159.5 669.6l3.4 3.4l-3.4 3.4l-3.4 -3.4z M1161.6 669.0l3.4 3.4l-3.4 3.4l-3.4 -3.4z M1163.5 667.9l3.4 3.4l-3.4 3.4l-3.4 -3.4z M1165.4 668.1l3.4 3.4l-3.4 3.4l-3.4 -3.4z M1166.8 669.8l3.4 3.4l-3.4 3.4l-3.4 -3.4z" fill="#1010c4" stroke="none" clip-path="url(#cp2)"/>
<path d="M663.0 549.6 L664.2 549.3 L665.8 549.0 L667.7 548.5 L669.8 548.1 L672.0 547.6 L674.2 547.0 L676.5 546.5 L678.6 546.0 L680.6 545.5 L682.7 545.0 L684.8 544.4 L686.9 543.8 L689.1 543.3 L691.2 542.8 L693.3 542.3 L695.4 541.8 L697.5 541.4 L699.6 541.0 L701.7 540.7 L703.8 540.4 L705.8 540.1 L707.9 539.8 L710.0 539.5 L712.0 539.2 L714.0 538.9 L716.0 538.5 L718.0 538.1 L720.0 537.8 L722.0 537.4 L724.0 537.1 L726.0 536.8 L728.0 536.6 L730.0 536.4 L732.0 536.3 L734.0 536.2 L736.0 536.1 L738.0 536.1 L740.0 536.0 L742.0 535.9 L744.0 535.8 L746.0 535.7 L747.9 535.5 L749.9 535.4 L751.8 535.2 L753.7 535.0 L755.7 534.9 L757.6 534.7 L759.6 534.6 L761.6 534.5 L763.6 534.3 L765.6 534.2 L767.6 534.1 L769.6 534.0 L771.6 533.9 L773.6 533.8 L775.6 533.8 L777.6 533.8 L779.6 533.8 L781.6 533.8 L783.5 533.8 L785.5 533.8 L787.5 533.9 L789.6 533.9 L791.6 534.0 L793.7 534.1 L795.8 534.2 L797.9 534.3 L800.1 534.4 L802.3 534.5 L804.4 534.6 L806.5 534.7 L808.6 534.8 L810.6 534.9 L812.7 534.9 L814.7 534.9 L816.6 534.9 L818.6 535.0 L820.6 535.0 L822.6 535.0 L824.6 535.0 L826.6 535.0 L828.7 535.0 L830.7 535.0 L832.8 535.0 L834.9 535.0 L836.9 535.0 L839.0 535.0 L841.0 535.0 L843.0 535.0 L845.0 535.1 L847.0 535.1 L849.0 535.2 L851.0 535.2 L853.0 535.3 L855.0 535.4 L857.0 535.4 L859.0 535.4 L861.0 535.5 L863.0 535.5 L865.0 535.5 L867.0 535.5 L869.0 535.5 L871.0 535.6 L873.0 535.6 L875.0 535.6 L877.0 535.7 L879.0 535.8 L880.9 535.8 L882.9 535.9 L884.9 535.9 L887.0 536.0 L889.0 536.0 L891.1 536.0 L893.2 536.0 L895.3 536.0 L897.5 536.0 L899.7 536.0 L901.8 536.0 L903.9 536.0 L906.0 536.0 L908.0 536.0 L910.1 536.0 L912.1 536.0 L914.1 536.0 L916.0 536.0 L918.0 536.0 L920.0 536.0 L922.0 536.0 L924.0 536.0 L926.0 535.9 L928.0 535.9 L930.0 535.9 L932.0 535.8 L934.0 535.8 L936.0 535.7 L938.0 535.7 L940.0 535.7 L942.0 535.6 L943.9 535.6 L945.9 535.6 L947.9 535.6 L949.9 535.6 L951.9 535.6 L953.9 535.7 L955.9 535.8 L958.0 535.9 L960.1 536.1 L962.1 536.2 L964.2 536.4 L966.3 536.6 L968.3 536.8 L970.3 537.0 L972.3 537.2 L974.2 537.4 L976.2 537.7 L978.1 537.9 L980.0 538.2 L981.9 538.4 L983.8 538.7 L985.8 539.0 L987.8 539.3 L989.8 539.6 L991.8 539.9 L993.8 540.3 L995.8 540.6 L997.8 541.0 L999.8 541.4 L1001.9 541.8 L1004.0 542.2 L1006.1 542.7 L1008.3 543.1 L1010.4 543.6 L1012.6 544.1 L1014.7 544.6 L1016.8 545.2 L1018.9 545.8 L1020.9 546.4 L1022.9 547.1 L1024.9 547.8 L1026.8 548.5 L1028.8 549.2 L1030.7 550.0 L1032.7 550.8 L1034.7 551.6 L1036.7 552.5 L1038.7 553.3 L1040.8 554.2 L1042.8 555.1 L1044.9 556.1 L1046.9 557.2 L1049.0 558.2 L1051.0 559.4 L1053.0 560.6 L1055.0 562.0 L1057.0 563.3 L1059.0 564.8 L1061.0 566.2 L1062.9 567.7 L1064.9 569.3 L1066.9 570.8 L1068.9 572.3 L1070.8 573.9 L1072.8 575.5 L1074.8 577.1 L1076.7 578.8 L1078.7 580.5 L1080.7 582.2 L1082.7 584.0 L1084.7 585.8 L1086.7 587.7 L1088.8 589.6 L1090.8 591.5 L1092.9 593.5 L1094.9 595.5 L1097.0 597.6 L1099.0 599.8 L1101.0 602.0 L1103.0 604.3 L1105.0 606.7 L1107.0 609.1 L1108.9 611.6 L1110.9 614.2 L1113.0 616.8 L1115.0 619.6 L1117.1 622.6 L1119.4 625.8 L1121.7 629.1 L1123.9 632.5 L1126.2 635.8 L1128.3 639.1 L1130.3 642.2 L1132.0 645.0 L1133.6 647.6 L1135.0 650.1 L1136.2 652.4 L1137.4 654.6 L1138.5 656.7 L1139.4 658.6 L1140.2 660.4 L1141.0 662.0 L1141.6 663.4 L1142.1 664.6 L1142.5 665.7 L1142.8 666.6 L1143.0 667.3 L1143.2 668.0 L1143.4 668.5 L1143.5 669.0" stroke="#000000" stroke-width="1.2" clip-path="url(#cp)"/>
<path d="M663.0 546.2l3.4 3.4l-3.4 3.4l-3.4 -3.4z M678.6 542.6l3.4 3.4l-3.4 3.4l-3.4 -3.4z M695.4 538.4l3.4 3.4l-3.4 3.4l-3.4 -3.4z M712.0 535.8l3.4 3.4l-3.4 3.4l-3.4 -3.4z M728.0 533.2l3.4 3.4l-3.4 3.4l-3.4 -3.4z M744.0 532.4l3.4 3.4l-3.4 3.4l-3.4 -3.4z M759.6 531.2l3.4 3.4l-3.4 3.4l-3.4 -3.4z M775.6 530.4l3.4 3.4l-3.4 3.4l-3.4 -3.4z M791.6 530.6l3.4 3.4l-3.4 3.4l-3.4 -3.4z M808.6 531.4l3.4 3.4l-3.4 3.4l-3.4 -3.4z M824.6 531.6l3.4 3.4l-3.4 3.4l-3.4 -3.4z M841.0 531.6l3.4 3.4l-3.4 3.4l-3.4 -3.4z M857.0 532.0l3.4 3.4l-3.4 3.4l-3.4 -3.4z M873.0 532.2l3.4 3.4l-3.4 3.4l-3.4 -3.4z M889.0 532.6l3.4 3.4l-3.4 3.4l-3.4 -3.4z M906.0 532.6l3.4 3.4l-3.4 3.4l-3.4 -3.4z M922.0 532.6l3.4 3.4l-3.4 3.4l-3.4 -3.4z M938.0 532.3l3.4 3.4l-3.4 3.4l-3.4 -3.4z M953.9 532.3l3.4 3.4l-3.4 3.4l-3.4 -3.4z M970.3 533.6l3.4 3.4l-3.4 3.4l-3.4 -3.4z M985.8 535.6l3.4 3.4l-3.4 3.4l-3.4 -3.4z M1001.9 538.4l3.4 3.4l-3.4 3.4l-3.4 -3.4z M1018.9 542.4l3.4 3.4l-3.4 3.4l-3.4 -3.4z M1034.7 548.2l3.4 3.4l-3.4 3.4l-3.4 -3.4z M1051.0 556.0l3.4 3.4l-3.4 3.4l-3.4 -3.4z M1066.9 567.4l3.4 3.4l-3.4 3.4l-3.4 -3.4z M1082.7 580.6l3.4 3.4l-3.4 3.4l-3.4 -3.4z M1099.0 596.4l3.4 3.4l-3.4 3.4l-3.4 -3.4z M1115.0 616.2l3.4 3.4l-3.4 3.4l-3.4 -3.4z M1132.0 641.6l3.4 3.4l-3.4 3.4l-3.4 -3.4z M1141.0 658.6l3.4 3.4l-3.4 3.4l-3.4 -3.4z" fill="#06060c" stroke="none" clip-path="url(#cp2)"/>
<path d="M518.0 570.6 L519.8 570.0 L522.1 569.1 L524.9 568.1 L528.1 567.0 L531.4 565.8 L534.7 564.6 L538.0 563.4 L541.0 562.2 L543.9 561.1 L546.8 559.9 L549.6 558.7 L552.5 557.5 L555.4 556.3 L558.2 555.1 L561.1 554.0 L564.0 552.9 L566.9 551.9 L569.7 550.9 L572.6 549.9 L575.5 548.9 L578.3 548.0 L581.2 547.0 L584.1 546.0 L587.0 545.0 L589.9 543.9 L592.9 542.8 L595.8 541.6 L598.7 540.5 L601.7 539.3 L604.7 538.1 L607.7 536.9 L610.7 535.8 L613.7 534.7 L616.8 533.6 L619.9 532.4 L623.0 531.3 L626.1 530.2 L629.2 529.1 L632.3 528.0 L635.4 526.9 L638.5 525.8 L641.7 524.6 L644.8 523.5 L648.0 522.3 L651.1 521.2 L654.3 520.1 L657.4 519.0 L660.6 517.9 L663.7 516.9 L666.9 515.9 L670.0 514.9 L673.2 513.9 L676.3 512.9 L679.5 512.0 L682.6 511.0 L685.8 510.0 L689.0 509.0 L692.2 508.0 L695.4 506.9 L698.6 505.9 L701.8 504.9 L705.1 503.9 L708.3 502.9 L711.6 502.0 L714.9 501.2 L718.3 500.4 L721.7 499.6 L725.1 498.9 L728.5 498.2 L731.9 497.5 L735.2 496.7 L738.6 496.0 L741.9 495.2 L745.3 494.5 L748.6 493.7 L751.9 492.9 L755.2 492.2 L758.5 491.4 L761.7 490.7 L765.0 490.0 L768.2 489.3 L771.4 488.7 L774.6 488.0 L777.8 487.4 L781.0 486.8 L784.2 486.2 L787.4 485.6 L790.6 485.0 L793.9 484.4 L797.2 483.9 L800.5 483.4 L803.8 482.8 L807.1 482.3 L810.4 481.9 L813.7 481.4 L817.0 481.0 L820.2 480.6 L823.4 480.3 L826.6 479.9 L829.8 479.6 L833.0 479.3 L836.2 479.1 L839.4 478.8 L842.6 478.6 L845.9 478.4 L849.2 478.2 L852.5 478.1 L855.8 478.0 L859.2 477.8 L862.5 477.7 L865.8 477.7 L869.0 477.6 L872.2 477.5 L875.3 477.5 L878.5 477.5 L881.6 477.5 L884.7 477.5 L887.8 477.5 L890.9 477.5 L894.0 477.6 L897.1 477.7 L900.3 477.7 L903.4 477.8 L906.6 477.9 L909.7 478.0 L912.8 478.1 L915.9 478.3 L919.0 478.6 L922.0 479.0 L925.0 479.4 L928.0 479.9 L930.9 480.4 L933.9 480.9 L936.8 481.5 L939.7 482.1 L942.6 482.6 L945.5 483.1 L948.4 483.6 L951.3 484.1 L954.2 484.6 L957.0 485.2 L959.9 485.7 L962.8 486.3 L965.6 487.0 L968.4 487.7 L971.3 488.5 L974.1 489.3 L976.9 490.1 L979.7 491.0 L982.5 491.9 L985.3 492.8 L988.0 493.7 L990.7 494.6 L993.4 495.6 L996.1 496.6 L998.7 497.6 L1001.3 498.6 L1003.9 499.6 L1006.5 500.7 L1009.0 501.8 L1011.5 502.9 L1013.9 504.1 L1016.3 505.3 L1018.7 506.5 L1021.1 507.8 L1023.4 509.0 L1025.7 510.3 L1028.0 511.5 L1030.3 512.7 L1032.5 514.0 L1034.8 515.2 L1037.0 516.5 L1039.2 517.7 L1041.4 519.0 L1043.5 520.3 L1045.7 521.7 L1047.9 523.1 L1050.0 524.6 L1052.2 526.1 L1054.4 527.6 L1056.5 529.1 L1058.6 530.7 L1060.7 532.2 L1062.7 533.8 L1064.7 535.4 L1066.6 537.0 L1068.5 538.6 L1070.4 540.2 L1072.3 541.8 L1074.1 543.4 L1076.0 545.1 L1077.8 546.7 L1079.6 548.3 L1081.5 549.9 L1083.3 551.6 L1085.1 553.2 L1086.9 554.8 L1088.6 556.5 L1090.3 558.1 L1092.0 559.7 L1093.6 561.3 L1095.2 562.9 L1096.8 564.5 L1098.3 566.1 L1099.8 567.7 L1101.2 569.3 L1102.6 570.9 L1104.0 572.6 L1105.3 574.3 L1106.6 576.0 L1107.8 577.8 L1108.9 579.6 L1110.1 581.4 L1111.2 583.1 L1112.4 584.9 L1113.6 586.6 L1114.8 588.3 L1116.1 589.9 L1117.4 591.5 L1118.7 593.2 L1120.0 594.8 L1121.2 596.4 L1122.4 598.0 L1123.6 599.6 L1124.7 601.2 L1125.8 602.9 L1126.8 604.5 L1127.8 606.2 L1128.8 607.8 L1129.8 609.5 L1130.7 611.1 L1131.6 612.6 L1132.5 614.1 L1133.4 615.6 L1134.2 617.0 L1135.0 618.4 L1135.8 619.8 L1136.6 621.2 L1137.3 622.6 L1138.0 624.0 L1138.7 625.4 L1139.3 626.8 L1139.8 628.1 L1140.4 629.5 L1140.9 630.8 L1141.4 632.1 L1142.0 633.4 L1142.6 634.7 L1143.2 635.9 L1143.9 637.2 L1144.6 638.4 L1145.3 639.6 L1146.0 640.7 L1146.7 641.8 L1147.4 642.9 L1148.0 644.0 L1148.6 645.0 L1149.2 646.1 L1149.7 647.1 L1150.3 648.0 L1150.8 648.9 L1151.3 649.8 L1151.8 650.7 L1152.3 651.5 L1152.8 652.3 L1153.2 653.0 L1153.6 653.6 L1154.0 654.2 L1154.4 654.8 L1154.7 655.4 L1155.1 656.0 L1155.5 656.5 L1155.9 657.0 L1156.3 657.5 L1156.6 658.0 L1157.0 658.4 L1157.3 658.9 L1157.7 659.3 L1158.1 659.6 L1158.5 660.0 L1158.9 660.3 L1159.3 660.6 L1159.7 660.9 L1160.1 661.2 L1160.6 661.4 L1161.0 661.6 L1161.5 661.8 L1162.0 662.0 L1162.6 662.2 L1163.2 662.3 L1163.8 662.4 L1164.5 662.5 L1165.2 662.6 L1165.8 662.6 L1166.4 662.6 L1167.0 662.6 L1167.5 662.5 L1168.1 662.4 L1168.6 662.2 L1169.1 662.0 L1169.5 661.8 L1169.9 661.6 L1170.2 661.4 L1170.5 661.3" stroke="#4cbc58" stroke-width="1.2" clip-path="url(#cp)"/>
<path d="M518.0 567.2l3.4 3.4l-3.4 3.4l-3.4 -3.4z M541.0 558.8l3.4 3.4l-3.4 3.4l-3.4 -3.4z M564.0 549.5l3.4 3.4l-3.4 3.4l-3.4 -3.4z M587.0 541.6l3.4 3.4l-3.4 3.4l-3.4 -3.4z M610.7 532.4l3.4 3.4l-3.4 3.4l-3.4 -3.4z M635.4 523.5l3.4 3.4l-3.4 3.4l-3.4 -3.4z M660.6 514.5l3.4 3.4l-3.4 3.4l-3.4 -3.4z M685.8 506.6l3.4 3.4l-3.4 3.4l-3.4 -3.4z M711.6 498.6l3.4 3.4l-3.4 3.4l-3.4 -3.4z M738.6 492.6l3.4 3.4l-3.4 3.4l-3.4 -3.4z M765.0 486.6l3.4 3.4l-3.4 3.4l-3.4 -3.4z M790.6 481.6l3.4 3.4l-3.4 3.4l-3.4 -3.4z M817.0 477.6l3.4 3.4l-3.4 3.4l-3.4 -3.4z M842.6 475.2l3.4 3.4l-3.4 3.4l-3.4 -3.4z M869.0 474.2l3.4 3.4l-3.4 3.4l-3.4 -3.4z M894.0 474.2l3.4 3.4l-3.4 3.4l-3.4 -3.4z M919.0 475.2l3.4 3.4l-3.4 3.4l-3.4 -3.4z M942.6 479.2l3.4 3.4l-3.4 3.4l-3.4 -3.4z M965.6 483.6l3.4 3.4l-3.4 3.4l-3.4 -3.4z M988.0 490.3l3.4 3.4l-3.4 3.4l-3.4 -3.4z M1009.0 498.4l3.4 3.4l-3.4 3.4l-3.4 -3.4z M1028.0 508.1l3.4 3.4l-3.4 3.4l-3.4 -3.4z M1045.7 518.3l3.4 3.4l-3.4 3.4l-3.4 -3.4z M1062.7 530.4l3.4 3.4l-3.4 3.4l-3.4 -3.4z M1077.8 543.3l3.4 3.4l-3.4 3.4l-3.4 -3.4z M1092.0 556.3l3.4 3.4l-3.4 3.4l-3.4 -3.4z M1104.0 569.2l3.4 3.4l-3.4 3.4l-3.4 -3.4z M1113.6 583.2l3.4 3.4l-3.4 3.4l-3.4 -3.4z M1123.6 596.2l3.4 3.4l-3.4 3.4l-3.4 -3.4z M1131.6 609.2l3.4 3.4l-3.4 3.4l-3.4 -3.4z M1138.0 620.6l3.4 3.4l-3.4 3.4l-3.4 -3.4z M1142.6 631.3l3.4 3.4l-3.4 3.4l-3.4 -3.4z M1148.0 640.6l3.4 3.4l-3.4 3.4l-3.4 -3.4z M1152.3 648.1l3.4 3.4l-3.4 3.4l-3.4 -3.4z M1153.5 650.0l3.4 3.4l-3.4 3.4l-3.4 -3.4z M1154.6 651.8l3.4 3.4l-3.4 3.4l-3.4 -3.4z M1155.9 653.6l3.4 3.4l-3.4 3.4l-3.4 -3.4z M1157.3 655.4l3.4 3.4l-3.4 3.4l-3.4 -3.4z M1158.8 656.9l3.4 3.4l-3.4 3.4l-3.4 -3.4z M1160.7 658.1l3.4 3.4l-3.4 3.4l-3.4 -3.4z M1162.8 658.8l3.4 3.4l-3.4 3.4l-3.4 -3.4z M1164.9 659.1l3.4 3.4l-3.4 3.4l-3.4 -3.4z M1167.1 659.2l3.4 3.4l-3.4 3.4l-3.4 -3.4z M1169.2 658.5l3.4 3.4l-3.4 3.4l-3.4 -3.4z" fill="#2fe03a" stroke="none" clip-path="url(#cp2)"/>
<path d="M472.0 690.6 L473.9 689.5 L476.5 688.1 L479.5 686.4 L482.9 684.6 L486.5 682.6 L490.1 680.6 L493.7 678.6 L497.0 676.8 L500.1 675.1 L503.3 673.4 L506.4 671.7 L509.5 670.0 L512.7 668.3 L515.9 666.5 L519.2 664.7 L522.6 662.8 L526.1 660.9 L529.7 658.9 L533.3 656.8 L537.0 654.8 L540.7 652.7 L544.5 650.5 L548.2 648.3 L552.0 646.0 L555.8 643.7 L559.5 641.2 L563.3 638.8 L567.1 636.2 L571.0 633.7 L574.9 631.1 L578.8 628.5 L582.8 626.0 L586.9 623.5 L591.0 620.9 L595.1 618.3 L599.3 615.7 L603.5 613.2 L607.8 610.6 L612.2 608.1 L616.6 605.6 L621.1 603.1 L625.7 600.6 L630.3 598.1 L635.0 595.6 L639.7 593.2 L644.5 590.9 L649.2 588.7 L654.0 586.6 L658.8 584.7 L663.6 582.8 L668.5 581.1 L673.4 579.4 L678.3 577.8 L683.2 576.4 L688.1 574.9 L693.0 573.6 L697.9 572.3 L702.9 571.1 L707.8 570.0 L712.8 569.0 L717.7 568.0 L722.7 567.1 L727.7 566.3 L732.6 565.6 L737.5 565.0 L742.5 564.5 L747.5 564.2 L752.4 563.9 L757.4 563.6 L762.3 563.4 L767.2 563.1 L772.0 562.8 L776.8 562.4 L781.5 562.1 L786.2 561.7 L790.9 561.3 L795.5 560.9 L800.2 560.5 L804.9 560.2 L809.6 559.8 L814.4 559.4 L819.2 559.1 L824.0 558.8 L828.9 558.4 L833.7 558.1 L838.6 557.7 L843.3 557.3 L848.0 556.9 L852.6 556.4 L857.2 555.9 L861.6 555.4 L866.1 554.8 L870.6 554.3 L875.0 553.8 L879.5 553.3 L884.0 552.8 L888.6 552.4 L893.2 552.0 L897.8 551.6 L902.4 551.2 L907.0 550.9 L911.6 550.6 L916.2 550.3 L920.7 550.0 L925.2 549.7 L929.6 549.5 L934.1 549.3 L938.5 549.1 L942.9 548.9 L947.2 548.8 L951.5 548.7 L955.8 548.7 L960.0 548.8 L964.2 548.9 L968.3 549.0 L972.4 549.2 L976.4 549.5 L980.5 549.8 L984.5 550.2 L988.6 550.6 L992.7 551.1 L996.8 551.5 L1000.9 552.1 L1005.0 552.6 L1009.0 553.3 L1013.0 554.0 L1017.0 554.8 L1020.8 555.7 L1024.6 556.7 L1028.3 557.8 L1031.9 558.9 L1035.5 560.2 L1039.0 561.5 L1042.5 562.8 L1045.9 564.3 L1049.2 565.8 L1052.5 567.4 L1055.7 569.0 L1058.9 570.7 L1062.0 572.5 L1065.0 574.3 L1068.0 576.2 L1070.9 578.2 L1073.8 580.3 L1076.6 582.5 L1079.4 584.8 L1082.2 587.2 L1084.9 589.6 L1087.5 592.1 L1090.1 594.7 L1092.6 597.2 L1095.0 599.8 L1097.4 602.4 L1099.7 605.0 L1102.0 607.7 L1104.2 610.3 L1106.3 613.0 L1108.4 615.7 L1110.4 618.4 L1112.2 621.0 L1113.9 623.6 L1115.6 626.2 L1117.2 628.8 L1118.7 631.4 L1120.0 634.0 L1121.3 636.5 L1122.6 639.0 L1123.7 641.5 L1124.7 643.9 L1125.6 646.4 L1126.4 648.8 L1127.1 651.2 L1127.7 653.6 L1128.4 655.8 L1129.0 658.0 L1129.7 660.0 L1130.4 661.9 L1131.1 663.7 L1131.8 665.4 L1132.5 667.0 L1133.2 668.6 L1133.9 670.1 L1134.5 671.6 L1135.0 673.0 L1135.5 674.4 L1135.9 675.8 L1136.3 677.1 L1136.7 678.4 L1137.0 679.6 L1137.3 680.8 L1137.7 681.9 L1138.0 683.0 L1138.3 684.1 L1138.7 685.4 L1139.0 686.6 L1139.4 687.8 L1139.7 688.8 L1140.0 689.6 L1140.3 690.0 L1140.5 690.0 L1140.7 689.4 L1140.9 688.3 L1141.0 686.9 L1141.1 685.1 L1141.2 683.4 L1141.4 681.6 L1141.5 680.1 L1141.7 679.0 L1141.9 678.2 L1142.2 677.6 L1142.4 677.2 L1142.7 676.9 L1143.0 676.6 L1143.3 676.4 L1143.6 676.1 L1144.0 675.7 L1144.4 675.2 L1144.8 674.8 L1145.2 674.3 L1145.7 673.8 L1146.2 673.3 L1146.7 672.8 L1147.2 672.4 L1147.7 672.0 L1148.3 671.6 L1148.9 671.3 L1149.6 670.9 L1150.3 670.6 L1151.0 670.3 L1151.6 670.1 L1152.1 669.9 L1152.5 669.7" stroke="#4cbc58" stroke-width="1.2" clip-path="url(#cp)"/>
<path d="M472.0 687.2l3.4 3.4l-3.4 3.4l-3.4 -3.4z M497.0 673.4l3.4 3.4l-3.4 3.4l-3.4 -3.4z M522.6 659.4l3.4 3.4l-3.4 3.4l-3.4 -3.4z M552.0 642.6l3.4 3.4l-3.4 3.4l-3.4 -3.4z M582.8 622.6l3.4 3.4l-3.4 3.4l-3.4 -3.4z M616.6 602.2l3.4 3.4l-3.4 3.4l-3.4 -3.4z M654.0 583.2l3.4 3.4l-3.4 3.4l-3.4 -3.4z M693.0 570.2l3.4 3.4l-3.4 3.4l-3.4 -3.4z M732.6 562.2l3.4 3.4l-3.4 3.4l-3.4 -3.4z M772.0 559.4l3.4 3.4l-3.4 3.4l-3.4 -3.4z M809.6 556.4l3.4 3.4l-3.4 3.4l-3.4 -3.4z M848.0 553.5l3.4 3.4l-3.4 3.4l-3.4 -3.4z M884.0 549.4l3.4 3.4l-3.4 3.4l-3.4 -3.4z M920.7 546.6l3.4 3.4l-3.4 3.4l-3.4 -3.4z M955.8 545.3l3.4 3.4l-3.4 3.4l-3.4 -3.4z M988.6 547.2l3.4 3.4l-3.4 3.4l-3.4 -3.4z M1020.8 552.3l3.4 3.4l-3.4 3.4l-3.4 -3.4z M1049.2 562.4l3.4 3.4l-3.4 3.4l-3.4 -3.4z M1073.8 576.9l3.4 3.4l-3.4 3.4l-3.4 -3.4z M1095.0 596.4l3.4 3.4l-3.4 3.4l-3.4 -3.4z M1112.2 617.6l3.4 3.4l-3.4 3.4l-3.4 -3.4z M1123.7 638.1l3.4 3.4l-3.4 3.4l-3.4 -3.4z M1129.7 656.6l3.4 3.4l-3.4 3.4l-3.4 -3.4z M1135.0 669.6l3.4 3.4l-3.4 3.4l-3.4 -3.4z M1135.6 671.7l3.4 3.4l-3.4 3.4l-3.4 -3.4z M1136.2 673.8l3.4 3.4l-3.4 3.4l-3.4 -3.4z M1136.9 675.9l3.4 3.4l-3.4 3.4l-3.4 -3.4z M1137.5 678.0l3.4 3.4l-3.4 3.4l-3.4 -3.4z M1138.2 680.1l3.4 3.4l-3.4 3.4l-3.4 -3.4z M1138.9 682.2l3.4 3.4l-3.4 3.4l-3.4 -3.4z M1139.6 684.3l3.4 3.4l-3.4 3.4l-3.4 -3.4z M1140.4 686.3l3.4 3.4l-3.4 3.4l-3.4 -3.4z M1140.8 683.0l3.4 3.4l-3.4 3.4l-3.4 -3.4z M1141.1 679.4l3.4 3.4l-3.4 3.4l-3.4 -3.4z M1141.7 675.9l3.4 3.4l-3.4 3.4l-3.4 -3.4z M1143.4 672.9l3.4 3.4l-3.4 3.4l-3.4 -3.4z M1145.9 670.2l3.4 3.4l-3.4 3.4l-3.4 -3.4z M1148.7 668.0l3.4 3.4l-3.4 3.4l-3.4 -3.4z M1152.0 666.5l3.4 3.4l-3.4 3.4l-3.4 -3.4z" fill="#2fe03a" stroke="none" clip-path="url(#cp2)"/>
<path d="M472.6 588.6 L475.1 587.9 L478.5 586.9 L482.6 585.7 L487.0 584.4 L491.8 583.1 L496.6 581.7 L501.2 580.3 L505.6 579.0 L509.7 577.8 L513.8 576.6 L518.0 575.3 L522.1 574.1 L526.2 572.8 L530.3 571.6 L534.5 570.3 L538.6 569.0 L542.7 567.7 L546.8 566.4 L551.0 565.0 L555.1 563.7 L559.2 562.3 L563.4 560.9 L567.6 559.5 L571.8 558.0 L576.1 556.5 L580.4 554.9 L584.8 553.3 L589.1 551.6 L593.5 550.0 L597.9 548.3 L602.3 546.7 L606.7 545.0 L611.1 543.3 L615.4 541.7 L619.7 540.0 L624.1 538.3 L628.4 536.6 L632.8 534.9 L637.3 533.2 L641.8 531.6 L646.4 530.0 L651.1 528.4 L655.9 526.8 L660.6 525.3 L665.4 523.7 L670.3 522.2 L675.0 520.7 L679.8 519.2 L684.5 517.7 L689.2 516.2 L693.9 514.7 L698.6 513.2 L703.3 511.7 L708.0 510.3 L712.8 509.0 L717.5 507.7 L722.3 506.5 L727.1 505.4 L731.9 504.3 L736.7 503.3 L741.6 502.3 L746.4 501.4 L751.2 500.5 L756.0 499.6 L760.8 498.7 L765.5 497.9 L770.3 497.1 L775.0 496.3 L779.8 495.6 L784.5 494.9 L789.3 494.2 L794.0 493.6 L798.8 493.0 L803.5 492.4 L808.3 491.9 L813.1 491.4 L817.8 490.9 L822.6 490.5 L827.3 490.0 L832.0 489.6 L836.7 489.2 L841.3 488.8 L846.0 488.4 L850.6 488.1 L855.2 487.7 L859.8 487.4 L864.4 487.2 L869.0 487.0 L873.6 486.8 L878.1 486.7 L882.6 486.6 L887.1 486.5 L891.6 486.5 L896.1 486.6 L900.5 486.7 L905.0 487.0 L909.5 487.4 L913.9 487.9 L918.4 488.4 L922.9 489.1 L927.3 489.8 L931.7 490.6 L936.0 491.4 L940.3 492.2 L944.5 493.1 L948.7 494.0 L952.8 494.9 L956.9 495.9 L961.0 497.0 L965.0 498.1 L969.0 499.3 L973.0 500.6 L977.0 502.0 L980.9 503.5 L984.8 505.0 L988.7 506.6 L992.5 508.3 L996.3 510.0 L1000.0 511.8 L1003.7 513.6 L1007.3 515.5 L1010.8 517.4 L1014.3 519.4 L1017.8 521.4 L1021.2 523.5 L1024.5 525.5 L1027.8 527.6 L1031.0 529.7 L1034.2 531.8 L1037.3 533.9 L1040.4 536.1 L1043.4 538.2 L1046.4 540.4 L1049.3 542.5 L1052.2 544.6 L1055.0 546.7 L1057.8 548.7 L1060.6 550.7 L1063.3 552.7 L1066.0 554.6 L1068.6 556.5 L1071.2 558.4 L1073.7 560.4 L1076.2 562.3 L1078.6 564.2 L1080.9 566.2 L1083.2 568.1 L1085.4 570.0 L1087.6 572.0 L1089.7 573.9 L1091.8 575.8 L1093.8 577.7 L1095.8 579.6 L1097.7 581.5 L1099.6 583.3 L1101.4 585.2 L1103.2 587.0 L1105.0 588.9 L1106.8 590.7 L1108.6 592.6 L1110.4 594.5 L1112.2 596.3 L1114.1 598.2 L1115.9 600.0 L1117.6 601.9 L1119.4 603.7 L1121.0 605.7 L1122.6 607.6 L1124.1 609.6 L1125.6 611.6 L1127.0 613.7 L1128.3 615.8 L1129.6 617.9 L1130.9 620.0 L1132.1 622.0 L1133.3 624.0 L1134.5 625.9 L1135.6 627.7 L1136.7 629.5 L1137.8 631.2 L1138.8 633.0 L1139.8 634.8 L1140.8 636.6 L1141.7 638.5 L1142.6 640.5 L1143.5 642.6 L1144.3 644.8 L1145.1 647.0 L1145.8 649.2 L1146.5 651.3 L1147.1 653.4 L1147.7 655.3 L1148.2 657.1 L1148.6 658.8 L1148.9 660.4 L1149.1 661.9 L1149.4 663.5 L1149.6 665.0 L1149.8 666.5 L1150.0 668.0 L1150.2 669.5 L1150.5 671.1 L1150.7 672.6 L1150.9 674.2 L1151.0 675.7 L1151.2 677.2 L1151.4 678.6 L1151.5 680.0 L1151.6 681.5 L1151.7 683.2 L1151.8 684.9 L1151.8 686.5 L1151.9 687.9 L1151.9 689.1 L1152.0 689.8 L1152.0 690.0 L1152.0 689.6 L1152.1 688.6 L1152.1 687.2 L1152.2 685.5 L1152.2 683.6 L1152.2 681.7 L1152.3 679.7 L1152.3 678.0 L1152.3 676.3 L1152.4 674.6 L1152.4 672.8 L1152.4 671.0 L1152.5 669.2 L1152.5 667.4 L1152.5 665.7 L1152.6 664.0 L1152.6 662.3 L1152.7 660.7 L1152.7 659.0 L1152.7 657.4 L1152.8 655.8 L1152.9 654.4 L1153.0 653.1 L1153.2 652.0 L1153.5 651.1 L1153.8 650.4 L1154.1 649.9 L1154.5 649.5 L1155.0 649.2 L1155.4 648.8 L1155.9 648.5 L1156.5 648.0 L1157.1 647.4 L1157.9 646.8 L1158.7 646.2 L1159.6 645.5 L1160.4 644.9 L1161.2 644.4 L1161.8 643.9 L1162.3 643.6" stroke="#4cbc58" stroke-width="1.2" clip-path="url(#cp)"/>
<path d="M472.6 585.2l3.4 3.4l-3.4 3.4l-3.4 -3.4z M505.6 575.6l3.4 3.4l-3.4 3.4l-3.4 -3.4z M538.6 565.6l3.4 3.4l-3.4 3.4l-3.4 -3.4z M571.8 554.6l3.4 3.4l-3.4 3.4l-3.4 -3.4z M606.7 541.6l3.4 3.4l-3.4 3.4l-3.4 -3.4z M641.8 528.2l3.4 3.4l-3.4 3.4l-3.4 -3.4z M679.8 515.8l3.4 3.4l-3.4 3.4l-3.4 -3.4z M717.5 504.3l3.4 3.4l-3.4 3.4l-3.4 -3.4z M756.0 496.2l3.4 3.4l-3.4 3.4l-3.4 -3.4z M794.0 490.2l3.4 3.4l-3.4 3.4l-3.4 -3.4z M832.0 486.2l3.4 3.4l-3.4 3.4l-3.4 -3.4z M869.0 483.6l3.4 3.4l-3.4 3.4l-3.4 -3.4z M905.0 483.6l3.4 3.4l-3.4 3.4l-3.4 -3.4z M940.3 488.8l3.4 3.4l-3.4 3.4l-3.4 -3.4z M973.0 497.2l3.4 3.4l-3.4 3.4l-3.4 -3.4z M1003.7 510.2l3.4 3.4l-3.4 3.4l-3.4 -3.4z M1031.0 526.3l3.4 3.4l-3.4 3.4l-3.4 -3.4z M1055.0 543.3l3.4 3.4l-3.4 3.4l-3.4 -3.4z M1076.2 558.9l3.4 3.4l-3.4 3.4l-3.4 -3.4z M1093.8 574.3l3.4 3.4l-3.4 3.4l-3.4 -3.4z M1108.6 589.2l3.4 3.4l-3.4 3.4l-3.4 -3.4z M1122.6 604.2l3.4 3.4l-3.4 3.4l-3.4 -3.4z M1133.3 620.6l3.4 3.4l-3.4 3.4l-3.4 -3.4z M1141.7 635.1l3.4 3.4l-3.4 3.4l-3.4 -3.4z M1147.7 651.9l3.4 3.4l-3.4 3.4l-3.4 -3.4z M1148.2 654.5l3.4 3.4l-3.4 3.4l-3.4 -3.4z M1148.7 657.0l3.4 3.4l-3.4 3.4l-3.4 -3.4z M1149.1 659.6l3.4 3.4l-3.4 3.4l-3.4 -3.4z M1149.6 662.1l3.4 3.4l-3.4 3.4l-3.4 -3.4z M1150.0 664.7l3.4 3.4l-3.4 3.4l-3.4 -3.4z M1150.4 667.3l3.4 3.4l-3.4 3.4l-3.4 -3.4z M1150.7 669.8l3.4 3.4l-3.4 3.4l-3.4 -3.4z M1151.1 672.4l3.4 3.4l-3.4 3.4l-3.4 -3.4z M1151.3 675.0l3.4 3.4l-3.4 3.4l-3.4 -3.4z M1151.6 677.6l3.4 3.4l-3.4 3.4l-3.4 -3.4z M1151.7 680.2l3.4 3.4l-3.4 3.4l-3.4 -3.4z M1151.9 682.8l3.4 3.4l-3.4 3.4l-3.4 -3.4z M1152.0 685.4l3.4 3.4l-3.4 3.4l-3.4 -3.4z M1159.7 641.8l3.4 3.4l-3.4 3.4l-3.4 -3.4z" fill="#2fe03a" stroke="none" clip-path="url(#cp2)"/>
<path d="M444.4 671.0 L446.0 670.5 L448.2 669.9 L450.8 669.1 L453.7 668.3 L456.7 667.4 L459.8 666.6 L462.8 665.7 L465.6 665.0 L468.2 664.3 L470.8 663.7 L473.4 663.1 L476.1 662.5 L478.7 661.9 L481.3 661.3 L483.9 660.7 L486.6 660.0 L489.3 659.3 L492.0 658.6 L494.8 657.9 L497.5 657.2 L500.3 656.4 L503.1 655.7 L505.8 654.9 L508.6 654.0 L511.3 653.1 L514.1 652.2 L516.8 651.3 L519.5 650.4 L522.2 649.4 L525.0 648.4 L527.8 647.2 L530.6 646.0 L533.5 644.7 L536.4 643.2 L539.4 641.7 L542.4 640.2 L545.4 638.5 L548.5 636.9 L551.5 635.2 L554.6 633.6 L557.7 632.0 L560.8 630.4 L564.0 628.8 L567.2 627.2 L570.4 625.5 L573.6 623.7 L576.8 621.9 L580.0 620.0 L583.2 618.0 L586.3 615.8 L589.4 613.6 L592.6 611.4 L595.7 609.0 L598.9 606.7 L602.2 604.3 L605.6 602.0 L609.1 599.6 L612.7 597.2 L616.3 594.7 L620.0 592.2 L623.8 589.8 L627.5 587.3 L631.3 584.9 L635.0 582.6 L638.7 580.3 L642.4 578.1 L646.1 575.9 L649.8 573.7 L653.6 571.6 L657.3 569.5 L661.2 567.5 L665.0 565.6 L668.9 563.7 L672.8 561.9 L676.8 560.2 L680.8 558.5 L684.9 556.9 L688.9 555.4 L693.0 553.9 L697.0 552.6 L701.0 551.4 L705.1 550.2 L709.2 549.2 L713.2 548.2 L717.3 547.3 L721.4 546.5 L725.5 545.7 L729.6 545.0 L733.7 544.4 L737.8 543.9 L742.0 543.4 L746.1 543.0 L750.3 542.7 L754.4 542.4 L758.5 542.2 L762.6 542.0 L766.7 541.9 L770.8 541.8 L774.9 541.8 L779.0 541.8 L783.0 541.9 L787.1 542.0 L791.0 542.1 L795.0 542.2 L798.9 542.3 L802.8 542.5 L806.6 542.7 L810.4 543.0 L814.1 543.2 L817.9 543.5 L821.7 543.8 L825.4 544.0 L829.1 544.2 L832.9 544.5 L836.6 544.8 L840.3 545.1 L844.1 545.3 L847.7 545.6 L851.4 545.8 L855.0 546.0 L858.6 546.2 L862.1 546.3 L865.6 546.4 L869.1 546.5 L872.6 546.6 L876.1 546.7 L879.5 546.7 L883.0 546.7 L886.5 546.7 L890.0 546.6 L893.4 546.4 L896.9 546.3 L900.4 546.1 L903.9 546.0 L907.3 545.9 L910.8 545.8 L914.3 545.8 L917.7 545.7 L921.2 545.7 L924.7 545.8 L928.1 545.8 L931.6 545.8 L935.0 545.8 L938.4 545.8 L941.8 545.8 L945.2 545.7 L948.6 545.7 L952.0 545.7 L955.4 545.6 L958.8 545.6 L962.1 545.6 L965.3 545.6 L968.5 545.6 L971.6 545.6 L974.7 545.6 L977.7 545.6 L980.7 545.7 L983.7 545.8 L986.8 545.9 L989.9 546.2 L993.1 546.6 L996.3 547.0 L999.6 547.5 L1002.8 548.0 L1006.1 548.6 L1009.3 549.3 L1012.4 549.9 L1015.4 550.6 L1018.3 551.3 L1021.1 552.0 L1023.9 552.7 L1026.6 553.5 L1029.3 554.3 L1031.9 555.2 L1034.5 556.0 L1037.2 556.9 L1039.9 557.8 L1042.5 558.7 L1045.2 559.7 L1047.8 560.6 L1050.4 561.7 L1053.0 562.7 L1055.5 563.8 L1058.0 565.0 L1060.5 566.2 L1062.9 567.5 L1065.3 568.9 L1067.7 570.3 L1070.1 571.7 L1072.4 573.2 L1074.7 574.7 L1077.0 576.2 L1079.2 577.8 L1081.5 579.4 L1083.7 581.0 L1085.8 582.7 L1087.9 584.4 L1090.0 586.1 L1092.0 587.9 L1094.0 589.7 L1095.9 591.5 L1097.8 593.4 L1099.6 595.3 L1101.4 597.2 L1103.1 599.1 L1104.8 601.1 L1106.4 603.0 L1108.0 605.0 L1109.5 607.0 L1111.0 609.0 L1112.4 610.9 L1113.8 613.0 L1115.2 615.0 L1116.5 617.0 L1117.7 619.0 L1119.0 621.0 L1120.2 623.0 L1121.4 625.0 L1122.6 627.1 L1123.8 629.1 L1124.9 631.1 L1125.9 633.1 L1127.0 635.1 L1128.0 637.0 L1129.0 638.9 L1129.9 640.7 L1130.8 642.5 L1131.7 644.2 L1132.5 646.0 L1133.4 647.7 L1134.2 649.4 L1135.0 651.0 L1135.8 652.6 L1136.6 654.2 L1137.4 655.8 L1138.1 657.3 L1138.9 658.8 L1139.6 660.3 L1140.3 661.7 L1141.0 663.0 L1141.7 664.3 L1142.3 665.6 L1143.0 666.9 L1143.6 668.1 L1144.2 669.3 L1144.8 670.3 L1145.4 671.2 L1146.0 672.0 L1146.5 672.6 L1147.0 673.1 L1147.5 673.5 L1148.0 673.8 L1148.5 674.0 L1149.0 674.1 L1149.5 674.1 L1150.0 674.0 L1150.6 673.8 L1151.2 673.4 L1151.8 672.9 L1152.5 672.3 L1153.2 671.7 L1153.8 671.1 L1154.4 670.5 L1155.0 670.0 L1155.5 669.5 L1156.1 669.0 L1156.6 668.6 L1157.1 668.1 L1157.5 667.6 L1158.0 667.2 L1158.5 666.8 L1159.0 666.5 L1159.5 666.2 L1160.1 665.9 L1160.7 665.7 L1161.2 665.5 L1161.8 665.4 L1162.3 665.2 L1162.7 665.1 L1163.0 665.0" stroke="#4cbc58" stroke-width="1.2" clip-path="url(#cp)"/>
<path d="M444.4 667.6l3.4 3.4l-3.4 3.4l-3.4 -3.4z M465.6 661.6l3.4 3.4l-3.4 3.4l-3.4 -3.4z M486.6 656.6l3.4 3.4l-3.4 3.4l-3.4 -3.4z M508.6 650.6l3.4 3.4l-3.4 3.4l-3.4 -3.4z M530.6 642.6l3.4 3.4l-3.4 3.4l-3.4 -3.4z M554.6 630.2l3.4 3.4l-3.4 3.4l-3.4 -3.4z M580.0 616.6l3.4 3.4l-3.4 3.4l-3.4 -3.4z M605.6 598.6l3.4 3.4l-3.4 3.4l-3.4 -3.4z M635.0 579.2l3.4 3.4l-3.4 3.4l-3.4 -3.4z M665.0 562.2l3.4 3.4l-3.4 3.4l-3.4 -3.4z M697.0 549.2l3.4 3.4l-3.4 3.4l-3.4 -3.4z M729.6 541.6l3.4 3.4l-3.4 3.4l-3.4 -3.4z M762.6 538.6l3.4 3.4l-3.4 3.4l-3.4 -3.4z M795.0 538.8l3.4 3.4l-3.4 3.4l-3.4 -3.4z M825.4 540.6l3.4 3.4l-3.4 3.4l-3.4 -3.4z M855.0 542.6l3.4 3.4l-3.4 3.4l-3.4 -3.4z M883.0 543.3l3.4 3.4l-3.4 3.4l-3.4 -3.4z M910.8 542.4l3.4 3.4l-3.4 3.4l-3.4 -3.4z M938.4 542.4l3.4 3.4l-3.4 3.4l-3.4 -3.4z M965.3 542.2l3.4 3.4l-3.4 3.4l-3.4 -3.4z M989.9 542.8l3.4 3.4l-3.4 3.4l-3.4 -3.4z M1015.4 547.2l3.4 3.4l-3.4 3.4l-3.4 -3.4z M1037.2 553.5l3.4 3.4l-3.4 3.4l-3.4 -3.4z M1058.0 561.6l3.4 3.4l-3.4 3.4l-3.4 -3.4z M1077.0 572.8l3.4 3.4l-3.4 3.4l-3.4 -3.4z M1094.0 586.3l3.4 3.4l-3.4 3.4l-3.4 -3.4z M1108.0 601.6l3.4 3.4l-3.4 3.4l-3.4 -3.4z M1119.0 617.6l3.4 3.4l-3.4 3.4l-3.4 -3.4z M1128.0 633.6l3.4 3.4l-3.4 3.4l-3.4 -3.4z M1135.0 647.6l3.4 3.4l-3.4 3.4l-3.4 -3.4z M1141.0 659.6l3.4 3.4l-3.4 3.4l-3.4 -3.4z M1143.1 663.6l3.4 3.4l-3.4 3.4l-3.4 -3.4z M1145.3 667.5l3.4 3.4l-3.4 3.4l-3.4 -3.4z M1148.5 670.6l3.4 3.4l-3.4 3.4l-3.4 -3.4z M1152.4 669.0l3.4 3.4l-3.4 3.4l-3.4 -3.4z M1155.7 666.0l3.4 3.4l-3.4 3.4l-3.4 -3.4z M1159.1 663.0l3.4 3.4l-3.4 3.4l-3.4 -3.4z" fill="#2fe03a" stroke="none" clip-path="url(#cp2)"/>
<path d="M519.0 613.8 L519.8 613.5 L520.9 613.2 L522.1 612.7 L523.5 612.3 L525.1 611.7 L526.9 611.1 L528.8 610.4 L530.8 609.6 L533.0 608.7 L535.5 607.7 L538.2 606.7 L541.0 605.6 L543.9 604.4 L546.9 603.2 L549.8 601.9 L552.6 600.7 L555.4 599.5 L558.2 598.2 L561.0 596.8 L563.9 595.5 L566.7 594.1 L569.5 592.8 L572.3 591.4 L575.0 590.0 L577.7 588.6 L580.3 587.2 L582.9 585.8 L585.5 584.4 L588.1 583.0 L590.7 581.6 L593.4 580.2 L596.0 578.8 L598.7 577.4 L601.4 576.1 L604.1 574.7 L606.8 573.3 L609.5 572.0 L612.2 570.6 L615.0 569.3 L617.7 568.0 L620.4 566.7 L623.2 565.4 L626.0 564.1 L628.7 562.8 L631.5 561.6 L634.2 560.3 L637.0 559.1 L639.7 557.9 L642.4 556.7 L645.1 555.5 L647.8 554.4 L650.5 553.2 L653.1 552.1 L655.8 551.0 L658.5 549.9 L661.2 548.8 L663.9 547.7 L666.6 546.7 L669.3 545.6 L672.1 544.5 L674.8 543.5 L677.5 542.5 L680.3 541.6 L683.0 540.7 L685.7 539.9 L688.5 539.0 L691.3 538.3 L694.0 537.6 L696.8 536.8 L699.6 536.2 L702.3 535.5 L705.0 534.8 L707.7 534.1 L710.3 533.5 L712.9 532.8 L715.5 532.2 L718.1 531.6 L720.7 531.0 L723.4 530.4 L726.0 529.8 L728.7 529.2 L731.3 528.7 L734.0 528.1 L736.7 527.6 L739.3 527.1 L742.0 526.5 L744.8 526.1 L747.5 525.6 L750.3 525.2 L753.1 524.7 L755.9 524.3 L758.8 524.0 L761.6 523.6 L764.5 523.2 L767.3 522.9 L770.0 522.6 L772.7 522.3 L775.3 522.1 L777.9 521.8 L780.4 521.6 L783.0 521.4 L785.5 521.2 L788.1 520.9 L790.8 520.7 L793.5 520.4 L796.3 520.2 L799.0 519.9 L801.8 519.6 L804.6 519.3 L807.4 519.0 L810.2 518.8 L813.0 518.6 L815.7 518.4 L818.5 518.3 L821.2 518.2 L824.0 518.1 L826.7 518.0 L829.4 517.9 L832.1 517.8 L834.8 517.7 L837.5 517.6 L840.1 517.5 L842.8 517.3 L845.4 517.2 L848.0 517.1 L850.7 516.9 L853.3 516.8 L856.0 516.7 L858.7 516.6 L861.4 516.4 L864.2 516.3 L867.0 516.2 L869.7 516.1 L872.5 516.0 L875.2 515.9 L878.0 515.8 L880.8 515.8 L883.5 515.7 L886.3 515.7 L889.1 515.7 L891.8 515.8 L894.6 515.8 L897.3 515.8 L900.0 515.8 L902.7 515.8 L905.3 515.8 L907.9 515.8 L910.5 515.7 L913.1 515.7 L915.7 515.7 L918.3 515.8 L921.0 515.8 L923.7 515.9 L926.4 515.9 L929.2 516.0 L931.9 516.1 L934.7 516.2 L937.5 516.4 L940.2 516.6 L943.0 516.8 L945.7 517.1 L948.5 517.4 L951.3 517.8 L954.0 518.2 L956.8 518.7 L959.5 519.1 L962.2 519.6 L964.9 520.0 L967.6 520.4 L970.2 520.9 L972.8 521.3 L975.4 521.7 L978.0 522.2 L980.7 522.7 L983.3 523.2 L986.0 523.8 L988.7 524.4 L991.5 525.1 L994.3 525.8 L997.1 526.5 L999.9 527.2 L1002.7 528.1 L1005.4 528.9 L1008.2 529.8 L1010.9 530.8 L1013.7 531.8 L1016.4 532.8 L1019.1 533.9 L1021.8 535.0 L1024.5 536.2 L1027.2 537.4 L1029.9 538.6 L1032.6 539.8 L1035.2 541.1 L1037.8 542.3 L1040.5 543.6 L1043.1 544.9 L1045.7 546.3 L1048.3 547.8 L1051.0 549.3 L1053.7 550.9 L1056.3 552.5 L1059.0 554.2 L1061.7 555.9 L1064.4 557.7 L1067.1 559.6 L1069.9 561.5 L1072.6 563.6 L1075.4 565.7 L1078.2 567.9 L1081.0 570.2 L1083.8 572.6 L1086.7 575.0 L1089.5 577.6 L1092.3 580.2 L1095.0 583.0 L1097.7 585.8 L1100.3 588.6 L1102.9 591.5 L1105.5 594.4 L1108.1 597.6 L1110.7 600.9 L1113.3 604.6 L1116.0 608.6 L1118.8 613.2 L1121.8 618.6 L1124.9 624.4 L1127.9 630.4 L1130.9 636.2 L1133.6 641.6 L1136.0 646.3 L1138.0 650.0 L1139.5 652.7 L1140.7 654.5 L1141.5 655.8 L1142.1 656.6 L1142.5 657.1 L1143.0 657.5 L1143.4 657.9 L1144.0 658.5 L1144.7 659.2 L1145.4 659.9 L1146.1 660.5 L1146.8 661.0 L1147.4 661.5 L1148.0 661.9 L1148.4 662.2 L1148.8 662.5" stroke="#a42a2a" stroke-width="1.2" clip-path="url(#cp)"/>
<path d="M530.8 606.2l3.4 3.4l-3.4 3.4l-3.4 -3.4z M552.6 597.3l3.4 3.4l-3.4 3.4l-3.4 -3.4z M575.0 586.6l3.4 3.4l-3.4 3.4l-3.4 -3.4z M596.0 575.4l3.4 3.4l-3.4 3.4l-3.4 -3.4z M617.7 564.6l3.4 3.4l-3.4 3.4l-3.4 -3.4z M639.7 554.5l3.4 3.4l-3.4 3.4l-3.4 -3.4z M661.2 545.4l3.4 3.4l-3.4 3.4l-3.4 -3.4z M683.0 537.3l3.4 3.4l-3.4 3.4l-3.4 -3.4z M705.0 531.4l3.4 3.4l-3.4 3.4l-3.4 -3.4z M726.0 526.4l3.4 3.4l-3.4 3.4l-3.4 -3.4z M747.5 522.2l3.4 3.4l-3.4 3.4l-3.4 -3.4z M770.0 519.2l3.4 3.4l-3.4 3.4l-3.4 -3.4z M790.8 517.3l3.4 3.4l-3.4 3.4l-3.4 -3.4z M813.0 515.2l3.4 3.4l-3.4 3.4l-3.4 -3.4z M834.8 514.3l3.4 3.4l-3.4 3.4l-3.4 -3.4z M856.0 513.3l3.4 3.4l-3.4 3.4l-3.4 -3.4z M878.0 512.4l3.4 3.4l-3.4 3.4l-3.4 -3.4z M900.0 512.4l3.4 3.4l-3.4 3.4l-3.4 -3.4z M921.0 512.4l3.4 3.4l-3.4 3.4l-3.4 -3.4z M943.0 513.4l3.4 3.4l-3.4 3.4l-3.4 -3.4z M964.9 516.6l3.4 3.4l-3.4 3.4l-3.4 -3.4z M986.0 520.4l3.4 3.4l-3.4 3.4l-3.4 -3.4z M1008.2 526.4l3.4 3.4l-3.4 3.4l-3.4 -3.4z M1029.9 535.2l3.4 3.4l-3.4 3.4l-3.4 -3.4z M1051.0 545.9l3.4 3.4l-3.4 3.4l-3.4 -3.4z M1072.6 560.2l3.4 3.4l-3.4 3.4l-3.4 -3.4z M1095.0 579.6l3.4 3.4l-3.4 3.4l-3.4 -3.4z M1116.0 605.2l3.4 3.4l-3.4 3.4l-3.4 -3.4z M1138.0 646.6l3.4 3.4l-3.4 3.4l-3.4 -3.4z" fill="#dc2f28" stroke="none" clip-path="url(#cp2)"/>
</g>
<rect x="445.5" y="145.5" width="730.0" height="737.0" fill="none" stroke="#000" stroke-width="1.35"/>
<text transform="translate(419.6 513.6) rotate(-90)" text-anchor="middle" font-size="16" textLength="90" lengthAdjust="spacingAndGlyphs" fill="#111">Leistung[PS]</text>
<text transform="translate(1196.7 670.3) rotate(90)" text-anchor="middle" font-size="16" font-weight="bold" textLength="86" lengthAdjust="spacingAndGlyphs" fill="#000">Drehm[Nm]</text></svg>
<span id="t0" class="t" style="left:63.30px;top:104.44px;font-size:13px;font-weight:normal;color:#000;transform:scaleX(0.9460)">[ M: 185kg&nbsp; FA: 0.7m²&nbsp; Cw: 0.6&nbsp; R: 8.62&nbsp; U: 1.355m&nbsp; L#: 1</span>
<span id="t1" class="t" style="left:76.62px;top:131.04px;font-size:13px;font-weight:normal;color:#000;transform:scaleX(0.9890)">4.97 PS / 6267.03 1/min</span>
<span id="t2" class="t" style="left:74.52px;top:153.13px;font-size:13px;font-weight:normal;color:#000;transform:scaleX(0.9930)">5.77 Nm / 5691.72 1/min</span>
<span id="t3" class="t" style="left:288.16px;top:131.04px;font-size:13px;font-weight:normal;color:#000;transform:scaleX(0.9500)">k: 0.96912</span>
<span id="t4" class="t" style="left:260.99px;top:153.13px;font-size:13px;font-weight:normal;color:#000;transform:scaleX(0.9810)">Max: 7170.43 1/min</span>
<span id="t5" class="t" style="left:63.30px;top:189.44px;font-size:13px;font-weight:normal;color:#000;transform:scaleX(0.9460)">[ M: 185kg&nbsp; FA: 0.7m²&nbsp; Cw: 0.6&nbsp; R: 8.62&nbsp; U: 1.355m&nbsp; L#: 1</span>
<span id="t6" class="t" style="left:76.62px;top:216.04px;font-size:13px;font-weight:normal;color:#000;transform:scaleX(0.9890)">4.97 PS / 6426.66 1/min</span>
<span id="t7" class="t" style="left:74.52px;top:238.13px;font-size:13px;font-weight:normal;color:#000;transform:scaleX(0.9930)">5.61 Nm / 5953.69 1/min</span>
<span id="t8" class="t" style="left:288.16px;top:216.04px;font-size:13px;font-weight:normal;color:#000;transform:scaleX(0.9500)">k: 0.96912</span>
<span id="t9" class="t" style="left:260.99px;top:238.13px;font-size:13px;font-weight:normal;color:#000;transform:scaleX(0.9810)">Max: 7395.85 1/min</span>
<span id="t10" class="t" style="left:63.30px;top:275.44px;font-size:13px;font-weight:normal;color:#000;transform:scaleX(0.9460)">[ M: 185kg&nbsp; FA: 0.7m²&nbsp; Cw: 0.6&nbsp; R: 8.62&nbsp; U: 1.355m&nbsp; L#: 1</span>
<span id="t11" class="t" style="left:76.62px;top:302.04px;font-size:13px;font-weight:normal;color:#000;transform:scaleX(0.9890)">5.03 PS / 6373.91 1/min</span>
<span id="t12" class="t" style="left:74.52px;top:324.13px;font-size:13px;font-weight:normal;color:#000;transform:scaleX(0.9930)">6.06 Nm / 4229.93 1/min</span>
<span id="t13" class="t" style="left:288.16px;top:302.04px;font-size:13px;font-weight:normal;color:#000;transform:scaleX(0.9500)">k: 0.96912</span>
<span id="t14" class="t" style="left:260.99px;top:324.13px;font-size:13px;font-weight:normal;color:#000;transform:scaleX(0.9810)">Max: 7219.02 1/min</span>
<span id="t15" class="t" style="left:63.30px;top:360.44px;font-size:13px;font-weight:normal;color:#000;transform:scaleX(0.9460)">[ M: 185kg&nbsp; FA: 0.7m²&nbsp; Cw: 0.6&nbsp; R: 8.62&nbsp; U: 1.355m&nbsp; L#: 1</span>
<span id="t16" class="t" style="left:80.19px;top:387.04px;font-size:13px;font-weight:normal;color:#000;transform:scaleX(0.9890)">4.9 PS / 6571.27 1/min</span>
<span id="t17" class="t" style="left:74.52px;top:409.13px;font-size:13px;font-weight:normal;color:#000;transform:scaleX(0.9930)">5.47 Nm / 5544.73 1/min</span>
<span id="t18" class="t" style="left:288.16px;top:387.04px;font-size:13px;font-weight:normal;color:#000;transform:scaleX(0.9500)">k: 0.96912</span>
<span id="t19" class="t" style="left:260.99px;top:409.13px;font-size:13px;font-weight:normal;color:#000;transform:scaleX(0.9810)">Max: 7351.01 1/min</span>
<span id="t20" class="t" style="left:93.20px;top:445.44px;font-size:13px;font-weight:normal;color:#000;transform:scaleX(0.9660)">Mittel P80X, SI20.17, HLKD 120, BE5, HD90</span>
<span id="t21" class="t" style="left:76.62px;top:472.04px;font-size:13px;font-weight:normal;color:#000;transform:scaleX(0.9890)">4.95 PS / 6376.79 1/min</span>
<span id="t22" class="t" style="left:74.52px;top:494.13px;font-size:13px;font-weight:normal;color:#000;transform:scaleX(0.9930)">5.66 Nm / 4828.97 1/min</span>
<span id="t23" class="t" style="left:288.16px;top:472.04px;font-size:13px;font-weight:normal;color:#000;transform:scaleX(0.9500)">k: 0.96912</span>
<span id="t24" class="t" style="left:260.99px;top:494.13px;font-size:13px;font-weight:normal;color:#000;transform:scaleX(0.9810)">Max: 7326.59 1/min</span>
<span id="t25" class="t" style="left:63.30px;top:530.44px;font-size:13px;font-weight:normal;color:#000;transform:scaleX(0.9460)">[ M: 185kg&nbsp; FA: 0.7m²&nbsp; Cw: 0.6&nbsp; R: 8.62&nbsp; U: 1.355m&nbsp; L#: 1</span>
<span id="t26" class="t" style="left:76.62px;top:557.03px;font-size:13px;font-weight:normal;color:#000;transform:scaleX(0.9890)">5.55 PS / 6244.18 1/min</span>
<span id="t27" class="t" style="left:78.10px;top:579.13px;font-size:13px;font-weight:normal;color:#000;transform:scaleX(0.9930)">6.58 Nm / 5481.9 1/min</span>
<span id="t28" class="t" style="left:291.59px;top:557.03px;font-size:13px;font-weight:normal;color:#000;transform:scaleX(0.9500)">k: 0.9941</span>
<span id="t29" class="t" style="left:260.99px;top:579.13px;font-size:13px;font-weight:normal;color:#000;transform:scaleX(0.9810)">Max: 7371.92 1/min</span>
<span id="t30" class="t" style="left:63.30px;top:615.44px;font-size:13px;font-weight:normal;color:#000;transform:scaleX(0.9460)">[ M: 185kg&nbsp; FA: 0.7m²&nbsp; Cw: 0.6&nbsp; R: 8.62&nbsp; U: 1.355m&nbsp; L#: 1</span>
<span id="t31" class="t" style="left:76.62px;top:642.03px;font-size:13px;font-weight:normal;color:#000;transform:scaleX(0.9890)">4.82 PS / 6486.07 1/min</span>
<span id="t32" class="t" style="left:74.52px;top:664.13px;font-size:13px;font-weight:normal;color:#000;transform:scaleX(0.9930)">5.42 Nm / 5910.76 1/min</span>
<span id="t33" class="t" style="left:291.59px;top:642.03px;font-size:13px;font-weight:normal;color:#000;transform:scaleX(0.9500)">k: 0.9941</span>
<span id="t34" class="t" style="left:264.54px;top:664.13px;font-size:13px;font-weight:normal;color:#000;transform:scaleX(0.9810)">Max: 7230.9 1/min</span>
<span id="t35" class="t" style="left:63.30px;top:700.44px;font-size:13px;font-weight:normal;color:#000;transform:scaleX(0.9460)">[ M: 185kg&nbsp; FA: 0.7m²&nbsp; Cw: 0.6&nbsp; R: 8.62&nbsp; U: 1.355m&nbsp; L#: 1</span>
<span id="t36" class="t" style="left:76.62px;top:727.03px;font-size:13px;font-weight:normal;color:#000;transform:scaleX(0.9890)">5.37 PS / 6149.97 1/min</span>
<span id="t37" class="t" style="left:74.52px;top:749.13px;font-size:13px;font-weight:normal;color:#000;transform:scaleX(0.9930)">6.43 Nm / 5478.65 1/min</span>
<span id="t38" class="t" style="left:291.59px;top:727.03px;font-size:13px;font-weight:normal;color:#000;transform:scaleX(0.9500)">k: 0.9941</span>
<span id="t39" class="t" style="left:260.99px;top:749.13px;font-size:13px;font-weight:normal;color:#000;transform:scaleX(0.9810)">Max: 7289.59 1/min</span>
<span id="t40" class="t" style="left:63.30px;top:785.44px;font-size:13px;font-weight:normal;color:#000;transform:scaleX(0.9460)">[ M: 185kg&nbsp; FA: 0.7m²&nbsp; Cw: 0.6&nbsp; R: 8.62&nbsp; U: 1.355m&nbsp; L#: 1</span>
<span id="t41" class="t" style="left:76.62px;top:812.03px;font-size:13px;font-weight:normal;color:#000;transform:scaleX(0.9890)">4.89 PS / 6499.17 1/min</span>
<span id="t42" class="t" style="left:74.52px;top:834.13px;font-size:13px;font-weight:normal;color:#000;transform:scaleX(0.9930)">5.54 Nm / 4775.61 1/min</span>
<span id="t43" class="t" style="left:291.59px;top:812.03px;font-size:13px;font-weight:normal;color:#000;transform:scaleX(0.9500)">k: 0.9941</span>
<span id="t44" class="t" style="left:260.99px;top:834.13px;font-size:13px;font-weight:normal;color:#000;transform:scaleX(0.9810)">Max: 7316.12 1/min</span>
<span id="t45" class="t" style="left:93.90px;top:870.44px;font-size:13px;font-weight:normal;color:#000;transform:scaleX(0.9660)">Mittel P80X, SI20.15, HLKD 190, E4, HD102</span>
<span id="t46" class="t" style="left:76.62px;top:897.03px;font-size:13px;font-weight:normal;color:#000;transform:scaleX(0.9890)">5.14 PS / 6342.54 1/min</span>
<span id="t47" class="t" style="left:74.52px;top:919.13px;font-size:13px;font-weight:normal;color:#000;transform:scaleX(0.9930)">5.95 Nm / 5634.62 1/min</span>
<span id="t48" class="t" style="left:288.16px;top:897.03px;font-size:13px;font-weight:normal;color:#000;transform:scaleX(0.9500)">k: 0.96912</span>
<span id="t49" class="t" style="left:260.99px;top:919.13px;font-size:13px;font-weight:normal;color:#000;transform:scaleX(0.9810)">Max: 7298.23 1/min</span>
<span id="t50" class="t" style="left:29.60px;top:1.22px;font-size:15px;font-weight:bold;color:#fff;transform:scaleX(1.0536)">Diagramme: RPM [1/min] - Leistung[PS]/Drehm[Nm]</span>
<span id="t51" class="t" style="left:10.60px;top:29.33px;font-size:14px;font-weight:normal;color:#000;transform:scaleX(0.8244)">File</span>
<span id="t52" class="t" style="left:723.40px;top:112.59px;font-size:21px;font-weight:bold;color:#000;transform:scaleX(0.9458)">GSF Dyno V0.1.19</span>
<span id="t53" class="t" style="left:484.17px;top:886.72px;font-size:16px;font-weight:normal;color:#000;transform:scaleX(0.9850)">3000</span>
<span id="t54" class="t" style="left:560.67px;top:886.72px;font-size:16px;font-weight:normal;color:#000;transform:scaleX(0.9850)">3500</span>
<span id="t55" class="t" style="left:637.17px;top:886.72px;font-size:16px;font-weight:normal;color:#000;transform:scaleX(0.9850)">4000</span>
<span id="t56" class="t" style="left:713.67px;top:886.72px;font-size:16px;font-weight:normal;color:#000;transform:scaleX(0.9850)">4500</span>
<span id="t57" class="t" style="left:790.17px;top:886.72px;font-size:16px;font-weight:normal;color:#000;transform:scaleX(0.9850)">5000</span>
<span id="t58" class="t" style="left:866.67px;top:886.72px;font-size:16px;font-weight:normal;color:#000;transform:scaleX(0.9850)">5500</span>
<span id="t59" class="t" style="left:943.17px;top:886.72px;font-size:16px;font-weight:normal;color:#000;transform:scaleX(0.9850)">6000</span>
<span id="t60" class="t" style="left:1019.67px;top:886.72px;font-size:16px;font-weight:normal;color:#000;transform:scaleX(0.9850)">6500</span>
<span id="t61" class="t" style="left:1096.17px;top:886.72px;font-size:16px;font-weight:normal;color:#000;transform:scaleX(0.9850)">7000</span>
<span id="t62" class="t" style="left:431.27px;top:874.02px;font-size:16px;font-weight:normal;color:#000;transform:scaleX(0.9800)">0</span>
<span id="t63" class="t" style="left:431.27px;top:751.22px;font-size:16px;font-weight:normal;color:#000;transform:scaleX(0.9800)">1</span>
<span id="t64" class="t" style="left:431.27px;top:628.42px;font-size:16px;font-weight:normal;color:#000;transform:scaleX(0.9800)">2</span>
<span id="t65" class="t" style="left:431.27px;top:505.62px;font-size:16px;font-weight:normal;color:#000;transform:scaleX(0.9800)">3</span>
<span id="t66" class="t" style="left:431.27px;top:382.82px;font-size:16px;font-weight:normal;color:#000;transform:scaleX(0.9800)">4</span>
<span id="t67" class="t" style="left:431.27px;top:260.02px;font-size:16px;font-weight:normal;color:#000;transform:scaleX(0.9800)">5</span>
<span id="t68" class="t" style="left:431.27px;top:137.22px;font-size:16px;font-weight:normal;color:#000;transform:scaleX(0.9800)">6</span>
<span id="t69" class="t" style="left:1179.40px;top:873.72px;font-size:16px;font-weight:bold;color:#000;transform:scaleX(0.9500)">0</span>
<span id="t70" class="t" style="left:1179.40px;top:750.92px;font-size:16px;font-weight:bold;color:#000;transform:scaleX(0.9500)">2</span>
<span id="t71" class="t" style="left:1179.40px;top:628.12px;font-size:16px;font-weight:bold;color:#000;transform:scaleX(0.9500)">4</span>
<span id="t72" class="t" style="left:1179.40px;top:505.32px;font-size:16px;font-weight:bold;color:#000;transform:scaleX(0.9500)">6</span>
<span id="t73" class="t" style="left:1179.40px;top:382.52px;font-size:16px;font-weight:bold;color:#000;transform:scaleX(0.9500)">8</span>
<span id="t74" class="t" style="left:744.25px;top:907.52px;font-size:16px;font-weight:normal;color:#000;transform:scaleX(0.9601)">RPM [1/min]</span>
<span id="t75" class="t" style="left:505.75px;top:813.77px;font-size:10.2px;font-weight:normal;color:#000;transform:scaleX(0.9300)">NOT FOR SALE</span>
<span id="t76" class="t" style="left:511.25px;top:948.84px;font-size:13px;font-weight:normal;color:#000;transform:scaleX(0.9819)">Mittel</span>
<span id="t77" class="t" style="left:867.00px;top:948.84px;font-size:13px;font-weight:normal;color:#000;transform:scaleX(0.9848)">ASCII Export</span>
<span id="t78" class="t" style="left:1059.00px;top:948.84px;font-size:13px;font-weight:normal;color:#000;transform:scaleX(1.0340)">Screenshot</span>
</body></html>
